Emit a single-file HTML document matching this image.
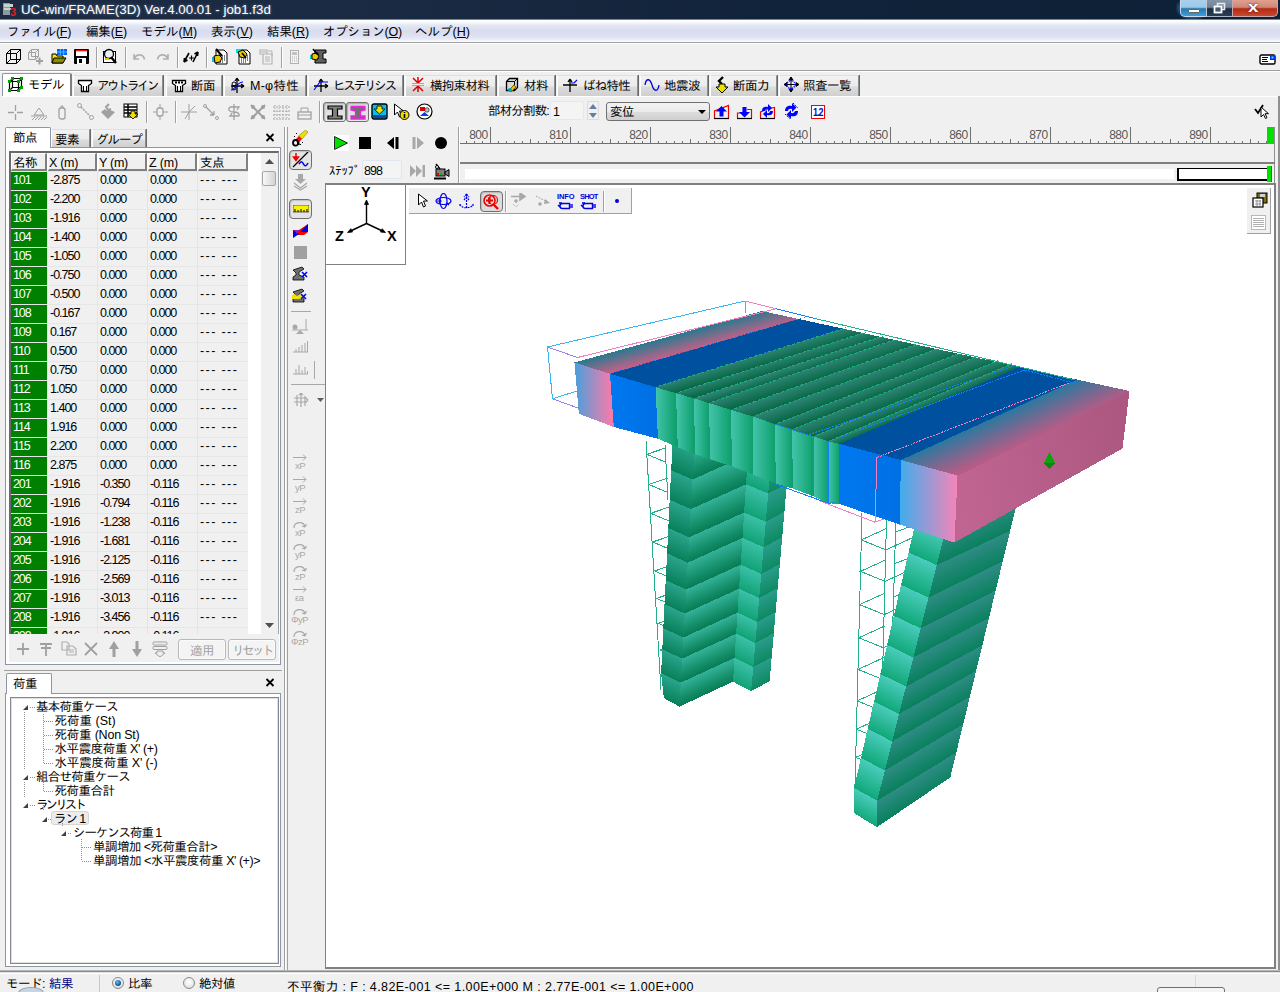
<!DOCTYPE html>
<html lang="ja"><head><meta charset="utf-8"><title>UC-win/FRAME(3D) Ver.4.00.01 - job1.f3d</title>
<style>
*{box-sizing:border-box;margin:0;padding:0}
html,body{width:1280px;height:992px;overflow:hidden;background:#f0f0f0}
body{position:relative;font-family:"Liberation Sans","IPAGothic",sans-serif;font-size:12px;color:#000;line-height:1}
.a{position:absolute}
.t{position:absolute;white-space:nowrap;line-height:1}
u{text-decoration:underline}
.tb{position:absolute;left:11px;top:153px;width:250px;height:481px;overflow:hidden}.r{position:absolute;left:0;width:237px;height:18px;font-size:12.5px;line-height:16px;white-space:nowrap}.r b{position:absolute;left:0;top:0;width:36px;height:18px;background:#008000;color:#fff;font-weight:normal;padding-left:2px;letter-spacing:-1.1px}.r i{position:absolute;top:0;width:50px;height:18px;background:#f0f0f0;font-style:normal;padding-left:2px;border-left:1px solid #e4e4e4;letter-spacing:-1px}
</style></head><body>
<div class="a" style="left:0px;top:0px;width:1280px;height:20px;background:linear-gradient(90deg,#1c2b42 0,#1a2a42 30%,#11233a 60%,#0d2036 100%)"></div>
<div class="a" style="left:0px;top:19px;width:1280px;height:1px;background:#7a8494"></div>
<svg class="a" style="left:2px;top:2px" width="18" height="16" viewBox="0 0 18 16" ><rect x="1" y="1" width="7" height="12" fill="#8a9aa0"/><rect x="2" y="2" width="9" height="3" fill="#c8d0d0"/><rect x="2" y="6" width="7" height="2" fill="#c8d0d0"/><text x="8" y="14" font-family="Liberation Sans,sans-serif" font-weight="bold" font-size="11" fill="#e02020">3</text></svg>
<span class="t" id="t0" style="left:21px;top:2.5px;font-size:13.3px;color:#fff;text-shadow:0 0 3px rgba(140,160,200,.8)">UC-win/FRAME(3D) Ver.4.00.01 - job1.f3d</span>
<div class="a" style="left:1176px;top:-4px;width:34px;height:24px;border-radius:8px;background:radial-gradient(ellipse at center,rgba(80,200,255,.9) 0,rgba(60,170,240,.5) 50%,rgba(40,120,200,0) 75%)"></div>
<div class="a" style="left:1180px;top:0px;width:27px;height:17px;border:1px solid #c8d8e8;border-top:none;border-radius:0 0 0 5px;background:linear-gradient(180deg,#a8d0ec 0,#9cc8e8 45%,#2878b0 55%,#38a0d8 100%)"></div>
<div class="a" style="left:1206px;top:0px;width:27px;height:17px;border:1px solid #a8b4c4;border-top:none;border-left:1px solid #c0c8d4;background:linear-gradient(180deg,#8494a8 0,#728298 45%,#1c2c44 55%,#2a3c56 100%)"></div>
<div class="a" style="left:1232px;top:0px;width:46px;height:17px;border:1px solid #c8a8a8;border-top:none;border-radius:0 0 5px 0;background:linear-gradient(180deg,#e0a090 0,#d08878 45%,#b42c14 55%,#c84830 100%)"></div>
<div class="a" style="left:1188px;top:9px;width:12px;height:4px;background:#fff;border:1px solid #666;border-radius:1px"></div>
<svg class="a" style="left:1213px;top:2px" width="14" height="12" viewBox="0 0 14 12" ><rect x="4.5" y="1.5" width="7" height="6" fill="none" stroke="#e8e8e8" stroke-width="1.6"/><rect x="1.5" y="4.5" width="7" height="6" fill="#4a5a70" stroke="#fff" stroke-width="1.8"/></svg>
<span class="t" id="t1" style="left:1248px;top:-1px;font-size:15px;color:#fff;font-weight:bold;text-shadow:0 0 2px #400;transform:scaleX(1.25);transform-origin:0 0">x</span>
<div class="a" style="left:0px;top:20px;width:1280px;height:22px;background:linear-gradient(180deg,#fff 0,#fafbfd 2px,#e4e8f4 5px,#d8dcee 11px,#dde1f1 16px,#eceff7 20px,#fff 22px)"></div>
<span class="t" id="t2" style="left:7px;top:25.5px;font-size:12.5px;letter-spacing:-0.28px;">ファイル(<u>F</u>)</span>
<span class="t" id="t3" style="left:86px;top:25.5px;font-size:12.5px;letter-spacing:-0.14px;">編集(<u>E</u>)</span>
<span class="t" id="t4" style="left:141px;top:25.5px;font-size:12.5px;letter-spacing:-0.04px;">モデル(<u>M</u>)</span>
<span class="t" id="t5" style="left:211px;top:25.5px;font-size:12.5px;letter-spacing:0.06px;">表示(<u>V</u>)</span>
<span class="t" id="t6" style="left:267px;top:25.5px;font-size:12.5px;letter-spacing:-0.07px;">結果(<u>R</u>)</span>
<span class="t" id="t7" style="left:323px;top:25.5px;font-size:12.5px;letter-spacing:-0.20px;">オプション(<u>O</u>)</span>
<span class="t" id="t8" style="left:415px;top:25.5px;font-size:12.5px;letter-spacing:0.02px;">ヘルプ(<u>H</u>)</span>
<div class="a" style="left:0px;top:42px;width:1280px;height:1px;background:#a0a0a0"></div>
<div class="a" style="left:0px;top:43px;width:1280px;height:1px;background:#fff"></div>
<svg class="a" style="left:5px;top:48px" width="17" height="17" viewBox="0 0 17 17" ><path d="M1.5 5.5h10v10h-10zM1.5 5.5l4-4h10v10l-4 4M11.5 5.5l4-4M5.5 1.5v10h10M5.5 11.5l-4 4" fill="none" stroke="#000" stroke-width="1"/></svg>
<svg class="a" style="left:27px;top:48px" width="17" height="17" viewBox="0 0 17 17" ><path d="M1.5 4.5h7v7h-7zM1.5 4.5l3-3h7v7l-3 3M8.5 4.5l3-3M4.5 1.5v7h7" fill="none" stroke="#a0a0a0"/><path d="M9 13h7M12.5 9.5v7" stroke="#a0a0a0" stroke-width="2"/></svg>
<svg class="a" style="left:51px;top:48px" width="17" height="17" viewBox="0 0 17 17" ><path d="M1 6h4l1 2h6v7h-11z" fill="#f0e020" stroke="#000"/><path d="M3 10h12l-3 5h-11z" fill="#8c8c00" stroke="#000"/><rect x="6" y="1" width="10" height="6" fill="#0060ff"/><path d="M6 4h10M9.3 1v6M12.6 1v6" stroke="#40c0ff"/></svg>
<svg class="a" style="left:73px;top:48px" width="17" height="17" viewBox="0 0 17 17" ><rect x="1" y="1" width="15" height="15" rx="1" fill="#000"/><rect x="3" y="2" width="11" height="6" fill="#fff"/><rect x="3" y="2" width="11" height="1.300" fill="#f01010"/><rect x="4" y="10" width="9" height="6" fill="#fff"/><rect x="6" y="11" width="3" height="4" fill="#000"/></svg>
<div class="a" style="left:96px;top:47px;width:1px;height:21px;background:#a0a0a0"></div>
<div class="a" style="left:97px;top:47px;width:1px;height:21px;background:#fff"></div>
<svg class="a" style="left:102px;top:48px" width="17" height="17" viewBox="0 0 17 17" ><rect x="1.5" y="3.5" width="12" height="11" fill="#fff" stroke="#000"/><circle cx="7" cy="6" r="4.5" fill="#e8f0f8" stroke="#000" stroke-width="1.3"/><path d="M9 9l5 6" stroke="#000" stroke-width="2.4"/><path d="M3 11h4" stroke="#e0c000" stroke-width="2"/></svg>
<div class="a" style="left:125px;top:47px;width:1px;height:21px;background:#a0a0a0"></div>
<div class="a" style="left:126px;top:47px;width:1px;height:21px;background:#fff"></div>
<svg class="a" style="left:132px;top:50px" width="16" height="12" viewBox="0 0 16 12" ><path d="M2 4v5h5M2.5 8.5c2-5 9-5 10 1" fill="none" stroke="#b0b0b0" stroke-width="1.6"/></svg>
<svg class="a" style="left:155px;top:50px" width="16" height="12" viewBox="0 0 16 12" ><path d="M13 4v5h-5M12.500 8.500c-2-5-9-5-10 1" fill="none" stroke="#b0b0b0" stroke-width="1.6"/></svg>
<div class="a" style="left:177px;top:47px;width:1px;height:21px;background:#a0a0a0"></div>
<div class="a" style="left:178px;top:47px;width:1px;height:21px;background:#fff"></div>
<svg class="a" style="left:183px;top:49px" width="17" height="15" viewBox="0 0 17 15" ><path d="M1 13l5-9M1 13l.5-4M1 13l3.500-2M10 13l5-10M15 3l-.5 4M15 3l-3.500 2" stroke="#000" stroke-width="1.6" fill="none"/><path d="M6 9h5M8.500 6.500v5" stroke="#000" stroke-width="1.2"/></svg>
<div class="a" style="left:206px;top:47px;width:1px;height:21px;background:#a0a0a0"></div>
<div class="a" style="left:207px;top:47px;width:1px;height:21px;background:#fff"></div>
<svg class="a" style="left:212px;top:48px" width="17" height="17" viewBox="0 0 17 17" ><path d="M4 2h8l3 3v11h-11z" fill="#fff" stroke="#000"/><path d="M6 8h7M6 10h7M6 12h7M6 14h5" stroke="#000" stroke-dasharray="1 1"/><rect x="0" y="9" width="4" height="5" fill="#00c0e0"/><path d="M2 8l5-1 3 3-2 4-5 1z" fill="#e8c800" stroke="#000"/><path d="M4 1l6 7" stroke="#000" stroke-width="2"/></svg>
<svg class="a" style="left:235px;top:48px" width="17" height="17" viewBox="0 0 17 17" ><path d="M4 2h8l3 3v11h-11z" fill="#fff" stroke="#000"/><path d="M6 8h7M6 10h7M6 12h7M6 14h5" stroke="#000" stroke-dasharray="1 1"/><rect x="1" y="1" width="5" height="4" fill="#00e0f0"/><path d="M3 4l5-2 4 4-2 4-5-1z" fill="#e8c800" stroke="#000"/><path d="M7 5l4 5" stroke="#000" stroke-width="1.5"/></svg>
<svg class="a" style="left:258px;top:48px" width="17" height="17" viewBox="0 0 17 17" ><path d="M2 2h7v4h-7zM5 6h9v10h-9zM7 9h5M7 11h5M7 13h5M3 4h5" fill="none" stroke="#b4b4b4" stroke-width="1.2"/><path d="M10 3h4v5" fill="none" stroke="#b4b4b4"/></svg>
<div class="a" style="left:281px;top:47px;width:1px;height:21px;background:#a0a0a0"></div>
<div class="a" style="left:282px;top:47px;width:1px;height:21px;background:#fff"></div>
<svg class="a" style="left:289px;top:49px" width="11" height="16" viewBox="0 0 11 16" ><rect x="1.5" y="1.5" width="8" height="13" fill="#f4f4f4" stroke="#b0b0b0"/><rect x="3" y="3" width="5" height="3" fill="#c0c0c0"/><path d="M3 8h5M3 10h5M3 12h5" stroke="#b0b0b0" stroke-dasharray="1 1"/></svg>
<svg class="a" style="left:310px;top:48px" width="17" height="17" viewBox="0 0 17 17" ><path d="M5 2h11v3h-3v6h3v4h-11v-4h3v-6h-3z" fill="#606060" stroke="#000"/><rect x="0" y="7" width="4" height="4" fill="#00d0e0"/><path d="M2 6l5-1 2 3-2 4-5-1z" fill="#e8c800" stroke="#000"/><path d="M3 1l5 6" stroke="#000" stroke-width="1.6"/></svg>
<svg class="a" style="left:1259px;top:54px" width="17" height="11" viewBox="0 0 17 11" ><rect x="1" y="1" width="15" height="9" rx="1.500" fill="#fff" stroke="#000" stroke-width="1.4"/><path d="M3 3.500h6M3 5.500h5M3 7.500h6" stroke="#000"/><rect x="11" y="1" width="5" height="5" fill="#0030e0"/><rect x="12.500" y="2.500" width="2" height="2" fill="#40e0ff"/></svg>
<div class="a" style="left:0px;top:70px;width:1280px;height:1px;background:#a0a0a0"></div>
<div class="a" style="left:0px;top:71px;width:1280px;height:1px;background:#fff"></div>
<div class="a" style="left:73px;top:75px;width:90px;height:21px;background:linear-gradient(180deg,#f2f2f2 0,#ebebeb 50%,#dcdcdc 55%,#cfcfcf 100%);border:1px solid #8c8e94;border-bottom:none;border-left-color:#fff;border-top-color:#e0e0e0;box-shadow:1px 0 0 #696969"></div>
<span class="t" id="t9" style="left:97px;top:79.5px;font-size:12.5px;letter-spacing:-2.50px;">アウトライン</span>
<div class="a" style="left:166px;top:75px;width:56px;height:21px;background:linear-gradient(180deg,#f2f2f2 0,#ebebeb 50%,#dcdcdc 55%,#cfcfcf 100%);border:1px solid #8c8e94;border-bottom:none;border-left-color:#fff;border-top-color:#e0e0e0;box-shadow:1px 0 0 #696969"></div>
<span class="t" id="t10" style="left:191px;top:79.5px;font-size:12.5px;letter-spacing:-0.50px;">断面</span>
<div class="a" style="left:224px;top:75px;width:82px;height:21px;background:linear-gradient(180deg,#f2f2f2 0,#ebebeb 50%,#dcdcdc 55%,#cfcfcf 100%);border:1px solid #8c8e94;border-bottom:none;border-left-color:#fff;border-top-color:#e0e0e0;box-shadow:1px 0 0 #696969"></div>
<span class="t" id="t11" style="left:250px;top:79.5px;font-size:12.5px;letter-spacing:0.26px;">M-φ特性</span>
<div class="a" style="left:308px;top:75px;width:95px;height:21px;background:linear-gradient(180deg,#f2f2f2 0,#ebebeb 50%,#dcdcdc 55%,#cfcfcf 100%);border:1px solid #8c8e94;border-bottom:none;border-left-color:#fff;border-top-color:#e0e0e0;box-shadow:1px 0 0 #696969"></div>
<span class="t" id="t12" style="left:333px;top:79.5px;font-size:12.5px;letter-spacing:-2.17px;">ヒステリシス</span>
<div class="a" style="left:405px;top:75px;width:91px;height:21px;background:linear-gradient(180deg,#f2f2f2 0,#ebebeb 50%,#dcdcdc 55%,#cfcfcf 100%);border:1px solid #8c8e94;border-bottom:none;border-left-color:#fff;border-top-color:#e0e0e0;box-shadow:1px 0 0 #696969"></div>
<span class="t" id="t13" style="left:430px;top:79.5px;font-size:12.5px;letter-spacing:-0.70px;">横拘束材料</span>
<div class="a" style="left:498px;top:75px;width:57px;height:21px;background:linear-gradient(180deg,#f2f2f2 0,#ebebeb 50%,#dcdcdc 55%,#cfcfcf 100%);border:1px solid #8c8e94;border-bottom:none;border-left-color:#fff;border-top-color:#e0e0e0;box-shadow:1px 0 0 #696969"></div>
<span class="t" id="t14" style="left:524px;top:79.5px;font-size:12.5px;letter-spacing:-0.50px;">材料</span>
<div class="a" style="left:557px;top:75px;width:81px;height:21px;background:linear-gradient(180deg,#f2f2f2 0,#ebebeb 50%,#dcdcdc 55%,#cfcfcf 100%);border:1px solid #8c8e94;border-bottom:none;border-left-color:#fff;border-top-color:#e0e0e0;box-shadow:1px 0 0 #696969"></div>
<span class="t" id="t15" style="left:583px;top:79.5px;font-size:12.5px;letter-spacing:-0.75px;">ばね特性</span>
<div class="a" style="left:640px;top:75px;width:68px;height:21px;background:linear-gradient(180deg,#f2f2f2 0,#ebebeb 50%,#dcdcdc 55%,#cfcfcf 100%);border:1px solid #8c8e94;border-bottom:none;border-left-color:#fff;border-top-color:#e0e0e0;box-shadow:1px 0 0 #696969"></div>
<span class="t" id="t16" style="left:664px;top:79.5px;font-size:12.5px;letter-spacing:-0.50px;">地震波</span>
<div class="a" style="left:710px;top:75px;width:67px;height:21px;background:linear-gradient(180deg,#f2f2f2 0,#ebebeb 50%,#dcdcdc 55%,#cfcfcf 100%);border:1px solid #8c8e94;border-bottom:none;border-left-color:#fff;border-top-color:#e0e0e0;box-shadow:1px 0 0 #696969"></div>
<span class="t" id="t17" style="left:733px;top:79.5px;font-size:12.5px;letter-spacing:-0.50px;">断面力</span>
<div class="a" style="left:779px;top:75px;width:80px;height:21px;background:linear-gradient(180deg,#f2f2f2 0,#ebebeb 50%,#dcdcdc 55%,#cfcfcf 100%);border:1px solid #8c8e94;border-bottom:none;border-left-color:#fff;border-top-color:#e0e0e0;box-shadow:1px 0 0 #696969"></div>
<span class="t" id="t18" style="left:803px;top:79.5px;font-size:12.5px;letter-spacing:-0.50px;">照査一覧</span>
<div class="a" style="left:2px;top:73px;width:70px;height:23px;background:#fff;border:1px solid #8e96a4;border-bottom:none;border-right:2px solid #808080;border-radius:2px 2px 0 0"></div>
<span class="t" id="t19" style="left:28px;top:79px;font-size:12.5px;letter-spacing:-0.50px;">モデル</span>
<div class="a" style="left:2px;top:96px;width:1276px;height:1px;background:#fff"></div>
<svg class="a" style="left:7px;top:76px" width="17" height="17" viewBox="0 0 17 17" ><path d="M2.500 5.500h9v9h-9zM2.500 5.500l3-3h9v9l-3 3M11.500 5.500l3-3M5.500 2.500v9h9M5.500 11.500l-3 3" fill="none" stroke="#000" stroke-width="1.2"/><g fill="#00a000"><rect x="1" y="4" width="3" height="3"/><rect x="10" y="4" width="3" height="3"/><rect x="1" y="13" width="3" height="3"/><rect x="10" y="13" width="3" height="3"/><rect x="13" y="1" width="3" height="3"/><rect x="4" y="1" width="3" height="3"/><rect x="13" y="10" width="3" height="3"/></g></svg>
<svg class="a" style="left:77px;top:78px" width="16" height="15" viewBox="0 0 16 15" ><path d="M1.500 2.500h13v3l-3 2v6h-7v-6l-3-2z" fill="#fff" stroke="#000" stroke-width="1.3"/><path d="M6.500 8v5M9.500 8v5" stroke="#000"/></svg>
<svg class="a" style="left:171px;top:78px" width="16" height="15" viewBox="0 0 16 15" ><path d="M1.500 2.500h13v3l-3 2v6h-7v-6l-3-2z" fill="#fff" stroke="#000" stroke-width="1.3"/><path d="M4 4.500h8" stroke="#000" stroke-dasharray="2 1" stroke-width="2"/><path d="M6.500 8v5M9.500 8v5" stroke="#000"/></svg>
<svg class="a" style="left:229px;top:77px" width="17" height="17" viewBox="0 0 17 17" ><path d="M8 1v15M2 9h13M8 1l-2 3M8 1l2 3M15 9l-3-2M15 9l-3 2" stroke="#000" stroke-width="1.3" fill="none"/><circle cx="5" cy="7" r="2" fill="none" stroke="#000"/><circle cx="5" cy="11" r="2" fill="none" stroke="#000"/><path d="M2 13c4 0 6-8 12-8" stroke="#0000ff" fill="none" stroke-width="1.2"/></svg>
<svg class="a" style="left:313px;top:77px" width="17" height="17" viewBox="0 0 17 17" ><path d="M8 2v13M1 9h14M8 2l-2 3M8 2l2 3M15 9l-3-2M15 9l-3 2" stroke="#000" stroke-width="1.3" fill="none"/><path d="M1 13l6-8h8" stroke="#0000ff" fill="none" stroke-width="1.2"/></svg>
<svg class="a" style="left:411px;top:76px" width="14" height="17" viewBox="0 0 14 17" ><path d="M7 1v6M2 2l5 5M12 2l-5 5M7 16v-6M2 15l5-5M12 15l-5-5" stroke="#e00000" stroke-width="1.500"/><path d="M1 7.500h12M1 9.500h12" stroke="#f0a000" stroke-width="1.2"/></svg>
<svg class="a" style="left:504px;top:76px" width="16" height="18" viewBox="0 0 16 18" ><path d="M2.500 5.500l3-3h8v9l-3 3h-8z" fill="#d8d8d8" stroke="#000" stroke-width="1.300"/><path d="M2.500 5.500h8v9M10.500 5.500l3-3" fill="none" stroke="#000"/><path d="M5 14l5-5 2 2-5 5z" fill="#e8c000" stroke="#806000"/><circle cx="6" cy="14" r="2" fill="#00a0c0"/></svg>
<svg class="a" style="left:562px;top:77px" width="17" height="17" viewBox="0 0 17 17" ><path d="M8 2v13M1 8h14M8 2l-2 3M8 2l2 3" stroke="#000" stroke-width="1.300" fill="none"/><path d="M9 6h3l3-3" stroke="#0000ff" fill="none" stroke-width="1.200"/></svg>
<svg class="a" style="left:644px;top:78px" width="16" height="14" viewBox="0 0 16 14" ><path d="M1 7c1-7 5-7 7 0s6 7 7 0" fill="none" stroke="#0000e0" stroke-width="1.300"/></svg>
<svg class="a" style="left:714px;top:76px" width="16" height="18" viewBox="0 0 16 18" ><path d="M9 1l-4 4 3 3" fill="none" stroke="#000" stroke-width="2.400"/><path d="M5 8h6v3h3l-6 6-6-6h3z" fill="#f0e000" stroke="#000"/></svg>
<svg class="a" style="left:783px;top:76px" width="17" height="17" viewBox="0 0 17 17" ><path d="M8 1v15M1 8.500h15M8 1l-2 3h4zM8 16l-2-3h4zM1 8.500l3-2v4zM16 8.500l-3-2v4z" stroke="#000" fill="#000"/><circle cx="8" cy="8.500" r="4" fill="none" stroke="#0000ff" stroke-dasharray="1 1" stroke-width="1.500"/></svg>
<svg class="a" style="left:8px;top:105px" width="15" height="15" viewBox="0 0 15 15" ><path d="M7.500 0v6M7.500 9v6M0 7.500h6M9 7.500h6" stroke="#a0a0a0" fill="none" stroke-width="1.300"/></svg>
<svg class="a" style="left:31px;top:107px" width="16" height="14" viewBox="0 0 16 14" ><path d="M8 1l-5 7h10zM0 9h16" stroke="#a0a0a0" fill="none"/><path d="M1 13l3-3M4 13l3-3M7 13l3-3M10 13l3-3M13 13l3-3" stroke="#a0a0a0" fill="none"/></svg>
<svg class="a" style="left:57px;top:105px" width="10" height="15" viewBox="0 0 10 15" ><rect x="2" y="3" width="6" height="11" rx="2" stroke="#a0a0a0" fill="none" stroke-width="1.300"/><path d="M4 3v-2h2v2" stroke="#a0a0a0" fill="none"/></svg>
<svg class="a" style="left:77px;top:103px" width="17" height="17" viewBox="0 0 17 17" ><circle cx="2.500" cy="2.500" r="2" stroke="#a0a0a0" fill="none"/><circle cx="14.500" cy="14.500" r="2" stroke="#a0a0a0" fill="none"/><path d="M4 4l9 9" stroke="#a0a0a0" fill="none" stroke-dasharray="2 1" stroke-width="1.500"/></svg>
<svg class="a" style="left:100px;top:103px" width="16" height="17" viewBox="0 0 16 17" ><path d="M9 1l-3 3 2 3 3-1" stroke="#a0a0a0" fill="none" stroke-width="2"/><path d="M1 9l4-3 2 2 3-1 5 2-7 7z" fill="#a0a0a0"/></svg>
<svg class="a" style="left:123px;top:103px" width="16" height="17" viewBox="0 0 16 17" ><rect x="1" y="1" width="13" height="13" fill="#fff" stroke="#000"/><path d="M1 4h13M1 7h13M1 10h13M5 1v13" stroke="#000" stroke-width="1.500"/><path d="M8 8h4v3h3l-5 5-5-5h3z" fill="#f0e000" stroke="#000" stroke-width=".8"/></svg>
<div class="a" style="left:146px;top:101px;width:1px;height:22px;background:#a0a0a0"></div>
<div class="a" style="left:147px;top:101px;width:1px;height:22px;background:#fff"></div>
<svg class="a" style="left:153px;top:104px" width="15" height="16" viewBox="0 0 15 16" ><path d="M7 0v4M7 12v4M0 8h4M10 8h5" stroke="#a0a0a0" fill="none"/><rect x="4" y="4" width="6" height="8" rx="2" stroke="#a0a0a0" fill="none" stroke-width="1.300"/></svg>
<div class="a" style="left:175px;top:101px;width:1px;height:22px;background:#a0a0a0"></div>
<div class="a" style="left:176px;top:101px;width:1px;height:22px;background:#fff"></div>
<svg class="a" style="left:181px;top:104px" width="16" height="16" viewBox="0 0 16 16" ><path d="M8 0v16M0 8h16M8 8l6-6M8 8l-4 7" stroke="#a0a0a0" fill="none"/></svg>
<svg class="a" style="left:203px;top:104px" width="16" height="16" viewBox="0 0 16 16" ><circle cx="2" cy="2" r="1.500" stroke="#a0a0a0" fill="none"/><circle cx="14" cy="14" r="1.500" stroke="#a0a0a0" fill="none"/><path d="M3 3l8 8M11 11v-4M11 11h-4" stroke="#a0a0a0" fill="none" stroke-width="1.300"/></svg>
<svg class="a" style="left:227px;top:104px" width="15" height="16" viewBox="0 0 15 16" ><path d="M3 3h9l-2 3M12 12h-9l2-3M3 3c-3 3 0 5 4 5s6 2 5 4M7 0v16" stroke="#a0a0a0" fill="none" stroke-width="1.300"/></svg>
<svg class="a" style="left:250px;top:104px" width="16" height="16" viewBox="0 0 16 16" ><path d="M1 1l14 14M15 1l-14 14" stroke="#a0a0a0" fill="none" stroke-width="2"/><circle cx="3" cy="3" r="2" fill="#a0a0a0"/><circle cx="13" cy="3" r="2" fill="#a0a0a0"/><circle cx="3" cy="13" r="2" fill="#a0a0a0"/><circle cx="13" cy="13" r="2" fill="#a0a0a0"/></svg>
<svg class="a" style="left:273px;top:105px" width="18" height="15" viewBox="0 0 18 15" ><path d="M0 2h18M0 6h18M0 10h18M0 14h18" stroke="#a0a0a0" fill="none" stroke-dasharray="2 1"/><path d="M2 0v15M6 0v15M10 0v15M14 0v15" stroke="#a0a0a0" fill="none" stroke-dasharray="1 2"/></svg>
<svg class="a" style="left:297px;top:105px" width="15" height="15" viewBox="0 0 15 15" ><rect x="1" y="7" width="13" height="7" stroke="#a0a0a0" fill="none" stroke-width="1.300"/><path d="M4 7v-4h7v4M1 10h13" stroke="#a0a0a0" fill="none"/></svg>
<div class="a" style="left:319px;top:101px;width:1px;height:22px;background:#a0a0a0"></div>
<div class="a" style="left:320px;top:101px;width:1px;height:22px;background:#fff"></div>
<div class="a" style="left:323px;top:102px;width:23px;height:20px;border:1px solid #707070;border-radius:3px;background:linear-gradient(180deg,#d8d8d8,#e8e8e8);box-shadow:inset 1px 1px 1px #b0b0b0"></div>
<div class="a" style="left:346px;top:102px;width:23px;height:20px;border:1px solid #707070;border-radius:3px;background:linear-gradient(180deg,#d8d8d8,#e8e8e8);box-shadow:inset 1px 1px 1px #b0b0b0"></div>
<svg class="a" style="left:327px;top:105px" width="16" height="15" viewBox="0 0 16 15" ><path d="M1 1h14v3h-4.500v7h4.500v3h-14v-3h4.500v-7h-4.500z" fill="#808080" stroke="#000" stroke-width="1.200"/></svg>
<svg class="a" style="left:350px;top:105px" width="16" height="15" viewBox="0 0 16 15" ><path d="M1 2h14v3l-4.500 1v5h4.500v3h-14v-3h4.500v-5l-4.500-1z" fill="#707070" stroke="#f020e0" stroke-width="1.300"/><path d="M1 1.500h14" stroke="#f020e0" stroke-width="1.500"/></svg>
<svg class="a" style="left:371px;top:103px" width="17" height="17" viewBox="0 0 17 17" ><rect x="1" y="1" width="15" height="15" rx="2" fill="#00c0f0" stroke="#000" stroke-width="1.400"/><path d="M6 3h5v3h3l-5.500 5-5.500-5h3z" fill="#f0e000" stroke="#000" stroke-width=".8"/><rect x="2" y="12" width="13" height="3" fill="#2040a0"/></svg>
<svg class="a" style="left:393px;top:103px" width="17" height="17" viewBox="0 0 17 17" ><path d="M1.500 1v11l3-3 2 5 2-1-2-5h4z" fill="#fff" stroke="#000"/><circle cx="11.500" cy="12" r="4.500" fill="#f0e000" stroke="#000"/><path d="M11.500 9v1M11.500 11v4" stroke="#000" stroke-width="1.600"/></svg>
<svg class="a" style="left:416px;top:103px" width="17" height="17" viewBox="0 0 17 17" ><circle cx="8.500" cy="8.500" r="7.500" fill="#fff" stroke="#000" stroke-width="1.200"/><rect x="4" y="4" width="5" height="4" fill="#e00000"/><circle cx="11" cy="7" r="2.200" fill="#c0c0c0" stroke="#000" stroke-width=".6"/><path d="M4 13l4.500-4 4.500 4z" fill="#0040e0"/></svg>
<span class="t" id="t20" style="left:488px;top:104.5px;font-size:12.5px;letter-spacing:-0.83px;">部材分割数:</span>
<div class="a" style="left:550px;top:101px;width:34px;height:19px;border:1px solid #e4e8ee;border-radius:2px;background:#f4f4f4"></div>
<span class="t" id="t21" style="left:553px;top:105.5px;font-size:12.5px;">1</span>
<div class="a" style="left:587px;top:101px;width:12px;height:19px;background:#f0f0f0;border:1px solid #dcdcdc"></div>
<svg class="a" style="left:589px;top:104px" width="8" height="14" viewBox="0 0 8 14" ><path d="M4 0l4 5h-8z" fill="#6080a8"/><path d="M4 14l4-5h-8z" fill="#6080a8"/></svg>
<div class="a" style="left:606px;top:102px;width:104px;height:19px;border:1px solid #707070;border-radius:3px;background:linear-gradient(180deg,#f2f2f2 0,#ebebeb 50%,#dddddd 52%,#cfcfcf 100%)"></div>
<span class="t" id="t22" style="left:610px;top:105.5px;font-size:12.5px;letter-spacing:-0.50px;">変位</span>
<svg class="a" style="left:698px;top:110px" width="8" height="4" viewBox="0 0 8 4" ><path d="M0 0h8l-4 4z" fill="#000"/></svg>
<svg class="a" style="left:713px;top:104px" width="17" height="16" viewBox="0 0 17 16" ><path d="M1.500 14v-7l14-5.500v12.500" fill="none" stroke="#f00000" stroke-width="1.200"/><path d="M1 14.500h15" stroke="#000" stroke-width="1.200"/><path d="M8.500 2l5.500 5.500h-3.500v5h-4v-5h-3.500z" fill="#0000ff"/></svg>
<svg class="a" style="left:736px;top:104px" width="17" height="16" viewBox="0 0 17 16" ><path d="M1.500 14v-5h4M11 5.500h4.500v8.500M6 9l4-3.500" fill="none" stroke="#f00000" stroke-width="1.200"/><path d="M1 14.500h15" stroke="#000" stroke-width="1.200"/><path d="M8.500 13.500l5.500-5.500h-3.500v-5h-4v5h-3.500z" fill="#0000ff"/></svg>
<svg class="a" style="left:759px;top:102px" width="17" height="18" viewBox="0 0 17 18" ><path d="M1.500 16v-6l7-3 7-1.500v10.500" fill="none" stroke="#f00000" stroke-width="1.200"/><path d="M1 16.500h15" stroke="#000" stroke-width="1.200"/><path d="M3 9c0-4 3-5 6-4v-3l4 4-4 4v-3c-2-.5-3 .5-3 2zM14 9c0 4-3 5-6 4v3l-4-4 4-4v3c2 .5 3-.5 3-2z" fill="#0000ff"/></svg>
<svg class="a" style="left:783px;top:102px" width="17" height="18" viewBox="0 0 17 18" ><path d="M2 9c0-5 4-6 7-5v-3l4.500 4.500-4.500 4.500v-3c-2-.5-4 .5-4 2zM15 9c0 5-4 6-7 5v3l-4.500-4.500 4.500-4.500v3c2 .5 4-.5 4-2z" fill="#0000ff"/><path d="M10 1l5 5M2 12l5 5" stroke="#0000ff" stroke-dasharray="1.500 1" fill="none"/></svg>
<div class="a" style="left:811px;top:105px;width:14px;height:14px;border:1px solid #f00000;background:#fff"></div>
<span class="t" id="t23" style="left:813px;top:106.5px;font-size:9px;color:#0000e0;letter-spacing:-1.01px;font-weight:bold;transform:scaleY(1.3);transform-origin:0 0">1.2</span>
<svg class="a" style="left:1254px;top:103px" width="15" height="16" viewBox="0 0 15 16" ><path d="M1 6l3 4 5-8" fill="none" stroke="#000" stroke-width="1.800"/><path d="M7 4v10l2.500-2.500 2 4 1.500-.8-2-4h3.500z" fill="#fff" stroke="#000"/></svg>
<div class="a" style="left:5px;top:147px;width:276px;height:518px;background:#fff;border:1px solid #8e96a4"></div>
<div class="a" style="left:51px;top:129px;width:39px;height:19px;background:linear-gradient(180deg,#f2f2f2 0,#ebebeb 50%,#dcdcdc 55%,#cfcfcf 100%);border:1px solid #8c8e94;border-bottom:none;border-left-color:#fff;border-top-color:#e0e0e0;box-shadow:1px 0 0 #696969"></div>
<span class="t" id="t24" style="left:55px;top:133.5px;font-size:12.5px;letter-spacing:-0.50px;">要素</span>
<div class="a" style="left:92px;top:129px;width:54px;height:19px;background:linear-gradient(180deg,#f2f2f2 0,#ebebeb 50%,#dcdcdc 55%,#cfcfcf 100%);border:1px solid #8c8e94;border-bottom:none;border-left-color:#fff;border-top-color:#e0e0e0;box-shadow:1px 0 0 #696969"></div>
<span class="t" id="t25" style="left:96px;top:133.5px;font-size:12.5px;letter-spacing:-1.00px;">グループ</span>
<div class="a" style="left:51px;top:147px;width:230px;height:1px;background:#8e96a4"></div>
<div class="a" style="left:5px;top:127px;width:46px;height:21px;background:#fff;border:1px solid #8e96a4;border-bottom:none;border-radius:2px 2px 0 0"></div>
<span class="t" id="t26" style="left:13px;top:131.5px;font-size:12.5px;letter-spacing:-0.50px;">節点</span>
<svg class="a" style="left:265px;top:133px" width="10" height="9" viewBox="0 0 10 9" ><path d="M1.500 1l7 7M8.500 1l-7 7" stroke="#000" stroke-width="1.800"/></svg>
<div class="a" style="left:9px;top:151px;width:270px;height:484px;background:#f0f0f0;border:2px solid #696969;border-right:1px solid #a0a0a0;border-bottom:none"></div>
<div class="a" style="left:11px;top:153px;width:267px;height:481px;background:#fff"></div>
<div class="a" style="left:11px;top:153px;width:36px;height:18px;background:#f0f0f0;border-top:1px solid #fff;border-left:1px solid #fff;border-right:2px solid #808080;border-bottom:2px solid #808080"></div>
<span class="t" id="t27" style="left:13px;top:156.5px;font-size:12.5px;letter-spacing:-0.50px;">名称</span>
<div class="a" style="left:47.5px;top:153px;width:49.5px;height:18px;background:#f0f0f0;border-top:1px solid #fff;border-left:1px solid #fff;border-right:2px solid #808080;border-bottom:2px solid #808080"></div>
<span class="t" id="t28" style="left:49px;top:156.5px;font-size:12.5px;letter-spacing:-0.31px;">X (m)</span>
<div class="a" style="left:97.5px;top:153px;width:49.5px;height:18px;background:#f0f0f0;border-top:1px solid #fff;border-left:1px solid #fff;border-right:2px solid #808080;border-bottom:2px solid #808080"></div>
<span class="t" id="t29" style="left:99px;top:156.5px;font-size:12.5px;letter-spacing:-0.27px;">Y (m)</span>
<div class="a" style="left:147.5px;top:153px;width:49.5px;height:18px;background:#f0f0f0;border-top:1px solid #fff;border-left:1px solid #fff;border-right:2px solid #808080;border-bottom:2px solid #808080"></div>
<span class="t" id="t30" style="left:149px;top:156.5px;font-size:12.5px;letter-spacing:-0.17px;">Z (m)</span>
<div class="a" style="left:197.5px;top:153px;width:50.5px;height:18px;background:#f0f0f0;border-top:1px solid #fff;border-left:1px solid #fff;border-right:2px solid #808080;border-bottom:2px solid #808080"></div>
<span class="t" id="t31" style="left:200px;top:156.5px;font-size:12.5px;letter-spacing:-0.50px;">支点</span>
<div class="tb"><div class="a" style="left:0;top:18px;width:237px;height:463px;background:#e6e6e6"></div><div class="r" style="top:19px"><b>101</b><i style="left:36px">-2.875</i><i style="left:86px">0.000</i><i style="left:136px">0.000</i><i style="left:186px;width:51px;letter-spacing:1.4px">--- ---</i></div><div class="r" style="top:38px"><b>102</b><i style="left:36px">-2.200</i><i style="left:86px">0.000</i><i style="left:136px">0.000</i><i style="left:186px;width:51px;letter-spacing:1.4px">--- ---</i></div><div class="r" style="top:57px"><b>103</b><i style="left:36px">-1.916</i><i style="left:86px">0.000</i><i style="left:136px">0.000</i><i style="left:186px;width:51px;letter-spacing:1.4px">--- ---</i></div><div class="r" style="top:76px"><b>104</b><i style="left:36px">-1.400</i><i style="left:86px">0.000</i><i style="left:136px">0.000</i><i style="left:186px;width:51px;letter-spacing:1.4px">--- ---</i></div><div class="r" style="top:95px"><b>105</b><i style="left:36px">-1.050</i><i style="left:86px">0.000</i><i style="left:136px">0.000</i><i style="left:186px;width:51px;letter-spacing:1.4px">--- ---</i></div><div class="r" style="top:114px"><b>106</b><i style="left:36px">-0.750</i><i style="left:86px">0.000</i><i style="left:136px">0.000</i><i style="left:186px;width:51px;letter-spacing:1.4px">--- ---</i></div><div class="r" style="top:133px"><b>107</b><i style="left:36px">-0.500</i><i style="left:86px">0.000</i><i style="left:136px">0.000</i><i style="left:186px;width:51px;letter-spacing:1.4px">--- ---</i></div><div class="r" style="top:152px"><b>108</b><i style="left:36px">-0.167</i><i style="left:86px">0.000</i><i style="left:136px">0.000</i><i style="left:186px;width:51px;letter-spacing:1.4px">--- ---</i></div><div class="r" style="top:171px"><b>109</b><i style="left:36px">0.167</i><i style="left:86px">0.000</i><i style="left:136px">0.000</i><i style="left:186px;width:51px;letter-spacing:1.4px">--- ---</i></div><div class="r" style="top:190px"><b>110</b><i style="left:36px">0.500</i><i style="left:86px">0.000</i><i style="left:136px">0.000</i><i style="left:186px;width:51px;letter-spacing:1.4px">--- ---</i></div><div class="r" style="top:209px"><b>111</b><i style="left:36px">0.750</i><i style="left:86px">0.000</i><i style="left:136px">0.000</i><i style="left:186px;width:51px;letter-spacing:1.4px">--- ---</i></div><div class="r" style="top:228px"><b>112</b><i style="left:36px">1.050</i><i style="left:86px">0.000</i><i style="left:136px">0.000</i><i style="left:186px;width:51px;letter-spacing:1.4px">--- ---</i></div><div class="r" style="top:247px"><b>113</b><i style="left:36px">1.400</i><i style="left:86px">0.000</i><i style="left:136px">0.000</i><i style="left:186px;width:51px;letter-spacing:1.4px">--- ---</i></div><div class="r" style="top:266px"><b>114</b><i style="left:36px">1.916</i><i style="left:86px">0.000</i><i style="left:136px">0.000</i><i style="left:186px;width:51px;letter-spacing:1.4px">--- ---</i></div><div class="r" style="top:285px"><b>115</b><i style="left:36px">2.200</i><i style="left:86px">0.000</i><i style="left:136px">0.000</i><i style="left:186px;width:51px;letter-spacing:1.4px">--- ---</i></div><div class="r" style="top:304px"><b>116</b><i style="left:36px">2.875</i><i style="left:86px">0.000</i><i style="left:136px">0.000</i><i style="left:186px;width:51px;letter-spacing:1.4px">--- ---</i></div><div class="r" style="top:323px"><b>201</b><i style="left:36px">-1.916</i><i style="left:86px">-0.350</i><i style="left:136px">-0.116</i><i style="left:186px;width:51px;letter-spacing:1.4px">--- ---</i></div><div class="r" style="top:342px"><b>202</b><i style="left:36px">-1.916</i><i style="left:86px">-0.794</i><i style="left:136px">-0.116</i><i style="left:186px;width:51px;letter-spacing:1.4px">--- ---</i></div><div class="r" style="top:361px"><b>203</b><i style="left:36px">-1.916</i><i style="left:86px">-1.238</i><i style="left:136px">-0.116</i><i style="left:186px;width:51px;letter-spacing:1.4px">--- ---</i></div><div class="r" style="top:380px"><b>204</b><i style="left:36px">-1.916</i><i style="left:86px">-1.681</i><i style="left:136px">-0.116</i><i style="left:186px;width:51px;letter-spacing:1.4px">--- ---</i></div><div class="r" style="top:399px"><b>205</b><i style="left:36px">-1.916</i><i style="left:86px">-2.125</i><i style="left:136px">-0.116</i><i style="left:186px;width:51px;letter-spacing:1.4px">--- ---</i></div><div class="r" style="top:418px"><b>206</b><i style="left:36px">-1.916</i><i style="left:86px">-2.569</i><i style="left:136px">-0.116</i><i style="left:186px;width:51px;letter-spacing:1.4px">--- ---</i></div><div class="r" style="top:437px"><b>207</b><i style="left:36px">-1.916</i><i style="left:86px">-3.013</i><i style="left:136px">-0.116</i><i style="left:186px;width:51px;letter-spacing:1.4px">--- ---</i></div><div class="r" style="top:456px"><b>208</b><i style="left:36px">-1.916</i><i style="left:86px">-3.456</i><i style="left:136px">-0.116</i><i style="left:186px;width:51px;letter-spacing:1.4px">--- ---</i></div><div class="r" style="top:475px"><b>209</b><i style="left:36px">-1.916</i><i style="left:86px">-3.900</i><i style="left:136px">-0.116</i><i style="left:186px;width:51px;letter-spacing:1.4px">--- ---</i></div></div>
<div class="a" style="left:261px;top:153px;width:17px;height:481px;background:#f0f0f0"></div>
<svg class="a" style="left:265px;top:159px" width="9" height="5" viewBox="0 0 9 5" ><path d="M0 5l4.500-5 4.500 5z" fill="#505050"/></svg>
<svg class="a" style="left:265px;top:623px" width="9" height="5" viewBox="0 0 9 5" ><path d="M0 0l4.500 5 4.500-5z" fill="#505050"/></svg>
<div class="a" style="left:262px;top:171px;width:14px;height:15px;background:linear-gradient(90deg,#f8f8f8,#e4e4e4 55%,#d4d4d4);border:1px solid #a8a8a8;border-radius:2px"></div>
<div class="a" style="left:9px;top:634px;width:270px;height:28px;background:#f0f0f0"></div>
<svg class="a" style="left:16px;top:642px" width="14" height="14" viewBox="0 0 14 14" ><path d="M7 1v12M1 7h12" stroke="#a0a0a0" fill="none" stroke-width="1.800"/></svg>
<svg class="a" style="left:39px;top:642px" width="14" height="14" viewBox="0 0 14 14" ><path d="M1 2h12M2 6h10M7 2v12" stroke="#a0a0a0" fill="none" stroke-width="1.800"/></svg>
<svg class="a" style="left:61px;top:641px" width="16" height="15" viewBox="0 0 16 15" ><path d="M1 1h5l2 2v6h-7zM6 5h6l3 3v6h-9z" fill="#f0f0f0" stroke="#b0b0b0" stroke-width="1.200"/><path d="M8 9h5M8 11h5" stroke="#b0b0b0"/></svg>
<svg class="a" style="left:84px;top:642px" width="15" height="14" viewBox="0 0 15 14" ><path d="M1 1l12 12M13 1l-12 12" stroke="#a0a0a0" fill="none" stroke-width="1.800"/></svg>
<svg class="a" style="left:108px;top:641px" width="12" height="16" viewBox="0 0 12 16" ><path d="M6 0l5 8h-3.500v8h-3v-8h-3.500z" fill="#a0a0a0"/></svg>
<svg class="a" style="left:131px;top:641px" width="12" height="16" viewBox="0 0 12 16" ><path d="M6 16l5-8h-3.500v-8h-3v8h-3.500z" fill="#a0a0a0"/></svg>
<svg class="a" style="left:152px;top:641px" width="16" height="16" viewBox="0 0 16 16" ><rect x="1" y="1" width="14" height="3" rx="1" stroke="#a0a0a0" fill="none"/><rect x="1" y="5.500" width="14" height="3" rx="1" stroke="#a0a0a0" fill="none"/><path d="M5 10h6v2h2l-5 4-5-4h2z" stroke="#a0a0a0" fill="none"/></svg>
<div class="a" style="left:178px;top:639px;width:48px;height:21px;border:1px solid #b8b8b8;border-radius:3px;background:#f4f4f4;box-shadow:inset 0 0 0 1px #fbfbfb"></div>
<div class="a" style="left:228px;top:639px;width:48px;height:21px;border:1px solid #b8b8b8;border-radius:3px;background:#f4f4f4;box-shadow:inset 0 0 0 1px #fbfbfb"></div>
<span class="t" id="t32" style="left:190px;top:644.5px;font-size:12.5px;color:#a0a0a0;letter-spacing:-0.50px;">適用</span>
<span class="t" id="t33" style="left:232px;top:644.5px;font-size:12.5px;color:#a0a0a0;letter-spacing:-2.50px;">リセット</span>
<div class="a" style="left:4px;top:670px;width:278px;height:1px;background:#a0a0a0"></div>
<div class="a" style="left:5px;top:693px;width:276px;height:274px;background:#fff;border:1px solid #8e96a4"></div>
<div class="a" style="left:6px;top:673px;width:46px;height:21px;background:#fff;border:1px solid #8e96a4;border-bottom:none;border-radius:2px 2px 0 0"></div>
<span class="t" id="t34" style="left:13px;top:677.5px;font-size:12.5px;letter-spacing:-0.50px;">荷重</span>
<svg class="a" style="left:265px;top:678px" width="10" height="9" viewBox="0 0 10 9" ><path d="M1.500 1l7 7M8.500 1l-7 7" stroke="#000" stroke-width="1.800"/></svg>
<div class="a" style="left:10px;top:697px;width:269px;height:267px;background:#fff;border:1px solid #828790;box-shadow:inset 0 0 0 1px #e0e0e0"></div>
<div class="a" style="left:51px;top:811px;width:38px;height:14px;background:#ececec;border:1px solid #d4d4d4;border-radius:3px"></div>
<span class="t" id="t35" style="left:36px;top:700.5px;font-size:12.5px;letter-spacing:-0.79px;">基本荷重ケース</span>
<svg class="a" style="left:23px;top:705px" width="5" height="5" viewBox="0 0 5 5" ><path d="M0 5h5v-5z" fill="#404040"/></svg>
<div class="a" style="left:30px;top:707px;width:5px;height:1px;background:repeating-linear-gradient(90deg,#909090 0,#909090 1px,transparent 1px,transparent 2px)"></div>
<span class="t" id="t36" style="left:54.5px;top:714.5px;font-size:12.5px;">死荷重 (St)</span>
<div class="a" style="left:44px;top:721px;width:9px;height:1px;background:repeating-linear-gradient(90deg,#909090 0,#909090 1px,transparent 1px,transparent 2px)"></div>
<span class="t" id="t37" style="left:54.5px;top:728.5px;font-size:12.5px;letter-spacing:-0.21px;">死荷重 (Non St)</span>
<div class="a" style="left:44px;top:735px;width:9px;height:1px;background:repeating-linear-gradient(90deg,#909090 0,#909090 1px,transparent 1px,transparent 2px)"></div>
<span class="t" id="t38" style="left:54.5px;top:742.5px;font-size:12.5px;letter-spacing:-0.41px;">水平震度荷重 X&#x27; (+)</span>
<div class="a" style="left:44px;top:749px;width:9px;height:1px;background:repeating-linear-gradient(90deg,#909090 0,#909090 1px,transparent 1px,transparent 2px)"></div>
<span class="t" id="t39" style="left:54.5px;top:756.5px;font-size:12.5px;letter-spacing:-0.17px;">水平震度荷重 X&#x27; (-)</span>
<div class="a" style="left:44px;top:763px;width:9px;height:1px;background:repeating-linear-gradient(90deg,#909090 0,#909090 1px,transparent 1px,transparent 2px)"></div>
<span class="t" id="t40" style="left:36px;top:770.5px;font-size:12.5px;letter-spacing:-0.75px;">組合せ荷重ケース</span>
<svg class="a" style="left:23px;top:775px" width="5" height="5" viewBox="0 0 5 5" ><path d="M0 5h5v-5z" fill="#404040"/></svg>
<div class="a" style="left:30px;top:777px;width:5px;height:1px;background:repeating-linear-gradient(90deg,#909090 0,#909090 1px,transparent 1px,transparent 2px)"></div>
<span class="t" id="t41" style="left:54.5px;top:784.5px;font-size:12.5px;letter-spacing:-0.50px;">死荷重合計</span>
<div class="a" style="left:44px;top:791px;width:9px;height:1px;background:repeating-linear-gradient(90deg,#909090 0,#909090 1px,transparent 1px,transparent 2px)"></div>
<span class="t" id="t42" style="left:36px;top:798.5px;font-size:12.5px;letter-spacing:-2.90px;">ランリスト</span>
<svg class="a" style="left:23px;top:803px" width="5" height="5" viewBox="0 0 5 5" ><path d="M0 5h5v-5z" fill="#404040"/></svg>
<div class="a" style="left:30px;top:805px;width:5px;height:1px;background:repeating-linear-gradient(90deg,#909090 0,#909090 1px,transparent 1px,transparent 2px)"></div>
<span class="t" id="t43" style="left:54px;top:812.5px;font-size:12.5px;letter-spacing:-1.11px;">ラン 1</span>
<svg class="a" style="left:42px;top:817px" width="5" height="5" viewBox="0 0 5 5" ><path d="M0 5h5v-5z" fill="#404040"/></svg>
<div class="a" style="left:48px;top:819px;width:3px;height:1px;background:repeating-linear-gradient(90deg,#909090 0,#909090 1px,transparent 1px,transparent 2px)"></div>
<span class="t" id="t44" style="left:73px;top:826.5px;font-size:12.5px;letter-spacing:-1.10px;">シーケンス荷重 1</span>
<svg class="a" style="left:61px;top:831px" width="5" height="5" viewBox="0 0 5 5" ><path d="M0 5h5v-5z" fill="#404040"/></svg>
<div class="a" style="left:68px;top:833px;width:4px;height:1px;background:repeating-linear-gradient(90deg,#909090 0,#909090 1px,transparent 1px,transparent 2px)"></div>
<span class="t" id="t45" style="left:93px;top:840.5px;font-size:12.5px;letter-spacing:-0.55px;">単調増加 &lt;死荷重合計&gt;</span>
<div class="a" style="left:82px;top:847px;width:9px;height:1px;background:repeating-linear-gradient(90deg,#909090 0,#909090 1px,transparent 1px,transparent 2px)"></div>
<span class="t" id="t46" style="left:93px;top:854.5px;font-size:12.5px;letter-spacing:-0.47px;">単調増加 &lt;水平震度荷重 X&#x27; (+)&gt;</span>
<div class="a" style="left:82px;top:861px;width:9px;height:1px;background:repeating-linear-gradient(90deg,#909090 0,#909090 1px,transparent 1px,transparent 2px)"></div>
<div class="a" style="left:24px;top:712px;width:1px;height:58px;background:repeating-linear-gradient(180deg,#909090 0,#909090 1px,transparent 1px,transparent 2px)"></div>
<div class="a" style="left:43px;top:714px;width:1px;height:50px;background:repeating-linear-gradient(180deg,#909090 0,#909090 1px,transparent 1px,transparent 2px)"></div>
<div class="a" style="left:24px;top:782px;width:1px;height:16px;background:repeating-linear-gradient(180deg,#909090 0,#909090 1px,transparent 1px,transparent 2px)"></div>
<div class="a" style="left:43px;top:782px;width:1px;height:10px;background:repeating-linear-gradient(180deg,#909090 0,#909090 1px,transparent 1px,transparent 2px)"></div>
<div class="a" style="left:43px;top:805px;width:1px;height:5px;background:repeating-linear-gradient(180deg,#909090 0,#909090 1px,transparent 1px,transparent 2px)"></div>
<div class="a" style="left:62px;top:821px;width:1px;height:5px;background:repeating-linear-gradient(180deg,#909090 0,#909090 1px,transparent 1px,transparent 2px)"></div>
<div class="a" style="left:81px;top:839px;width:1px;height:21px;background:repeating-linear-gradient(180deg,#909090 0,#909090 1px,transparent 1px,transparent 2px)"></div>
<div class="a" style="left:284px;top:127px;width:1px;height:843px;background:#a0a0a0"></div>
<div class="a" style="left:287px;top:127px;width:1px;height:843px;background:#a0a0a0"></div>
<div class="a" style="left:285px;top:127px;width:1px;height:843px;background:#fff"></div>
<svg class="a" style="left:292px;top:130px" width="17" height="17" viewBox="0 0 17 17" ><path d="M16 2l-6 7-3.500-3 7-6z" fill="#f0e000" stroke="#806000" stroke-width=".500"/><path d="M10 9l-3 3.500-3.500-3 3.500-3.500z" fill="#f01010"/><path d="M1 13c0-4 5-4 5 0s-5 3-5 0M6 11l1 4" fill="none" stroke="#000" stroke-width="1.800"/><path d="M4 3l1 1M2 6l1 1M8 14l1 1M10 12l1 1" stroke="#000"/></svg>
<div class="a" style="left:289px;top:150px;width:23px;height:20px;border:1px solid #707070;border-radius:4px;background:#e4e4e4;box-shadow:inset 1px 1px 1px #c0c0c0"></div>
<svg class="a" style="left:292px;top:152px" width="17" height="17" viewBox="0 0 17 17" ><path d="M1 15l15-15" stroke="#000" stroke-width="1.300"/><path d="M4 1v6M1.500 5l2.500 3.500 2.500-3.500z" stroke="#f00000" fill="#f00000" stroke-width="1.500"/><path d="M7 12c2-3 3-3 4.500 0s3 2 4.500-1" fill="none" stroke="#0000f0" stroke-width="1.600"/></svg>
<svg class="a" style="left:293px;top:174px" width="15" height="17" viewBox="0 0 15 17" ><path d="M5 0h5v5h3l-5.500 5-5.500-5h3z" fill="#a8a8a8"/><path d="M1 9l6.500 5 6.500-5M1 12l6.500 4 6.500-4" fill="none" stroke="#a8a8a8" stroke-width="1.300"/></svg>
<div class="a" style="left:289px;top:199px;width:23px;height:20px;border:1px solid #707070;border-radius:4px;background:#e4e4e4;box-shadow:inset 1px 1px 1px #c0c0c0"></div>
<svg class="a" style="left:293px;top:205px" width="16" height="8" viewBox="0 0 16 8" ><rect x="0" y="0" width="16" height="7" fill="#f8f000" stroke="#000" stroke-width=".600"/><path d="M2 7v-3M5 7v-2M8 7v-3M11 7v-2M14 7v-3" stroke="#000"/></svg>
<svg class="a" style="left:292px;top:223px" width="17" height="16" viewBox="0 0 17 16" ><path d="M1 7h6l9-6v8l-4 3h-11z" fill="#f00000"/><path d="M16 1v8l-8 0z" fill="#0000e0"/><path d="M1 7l6 4-6 4z" fill="#0000e0"/><path d="M2 7h5l-2 4z" fill="#8020e0"/></svg>
<div class="a" style="left:294px;top:246px;width:13px;height:13px;background:#a0a0a0"></div>
<svg class="a" style="left:292px;top:266px" width="17" height="16" viewBox="0 0 17 16" ><path d="M1 4l9-3 2 2-5 3v3l5 2v3h-11v-3l3-2v-2z" fill="#707070" stroke="#000" stroke-width=".800"/><path d="M10 6l5 5M15 6l-5 5" stroke="#0000f0" stroke-width="1.600"/></svg>
<svg class="a" style="left:292px;top:288px" width="17" height="16" viewBox="0 0 17 16" ><path d="M1 4l9-3 2 2-5 3v3l5 2v3h-11v-3l3-2v-2z" fill="#707070" stroke="#000" stroke-width=".800"/><path d="M0 7l3-1 2 2 3-2 3 2v3h-11z" fill="#f0e000"/><path d="M9 6l5 5M14 6l-5 5" stroke="#0000f0" stroke-width="1.600"/></svg>
<div class="a" style="left:291px;top:311px;width:20px;height:1px;background:#a8a8a8"></div>
<svg class="a" style="left:292px;top:319px" width="17" height="16" viewBox="0 0 17 16" ><circle cx="3" cy="8" r="2.500" fill="#a8a8a8"/><path d="M0 11h16M14 0v11" stroke="#a8a8a8" fill="none"/><path d="M8 11l-4 4h8z" fill="#a8a8a8"/></svg>
<svg class="a" style="left:293px;top:341px" width="16" height="12" viewBox="0 0 16 12" ><path d="M0 11h15M3 11v-3M6 11v-5M9 11v-7M12 11v-9M14.500 11v-11" stroke="#a8a8a8" fill="none"/></svg>
<svg class="a" style="left:293px;top:363px" width="16" height="12" viewBox="0 0 16 12" ><path d="M0 11h15M3 11v-5M6 11v-9M9 11v-4M12 11v-7M14.500 11v-3" stroke="#a8a8a8" fill="none"/></svg>
<div class="a" style="left:314px;top:361px;width:1px;height:18px;background:#a8a8a8"></div>
<div class="a" style="left:291px;top:384px;width:34px;height:1px;background:#a8a8a8"></div>
<svg class="a" style="left:293px;top:393px" width="16" height="15" viewBox="0 0 16 15" ><path d="M8 0v14M1 5h13M1 9h13M4 2v11M12 3v10M8 0l-2 2M8 0l2 2M15 7l-2-2M15 7l-2 2" stroke="#a8a8a8" fill="none" stroke-width="1.200"/></svg>
<svg class="a" style="left:317px;top:398px" width="7" height="4" viewBox="0 0 7 4" ><path d="M0 0h7l-3.500 4z" fill="#606060"/></svg>
<svg class="a" style="left:293px;top:454px" width="14" height="7" viewBox="0 0 14 7" ><path d="M0 3.500h13M10 .5l3 3-3 3" stroke="#a8a8a8" fill="none"/></svg>
<span class="t" id="t47" style="left:295px;top:461px;font-size:9.5px;color:#a8a8a8;letter-spacing:-.5px">xP</span>
<svg class="a" style="left:293px;top:475.5px" width="14" height="7" viewBox="0 0 14 7" ><path d="M0 3.500h13M10 .5l3 3-3 3" stroke="#a8a8a8" fill="none"/></svg>
<span class="t" id="t48" style="left:295px;top:482.5px;font-size:9.5px;color:#a8a8a8;letter-spacing:-.5px">yP</span>
<svg class="a" style="left:293px;top:498px" width="14" height="7" viewBox="0 0 14 7" ><path d="M0 3.500h13M10 .5l3 3-3 3" stroke="#a8a8a8" fill="none"/></svg>
<span class="t" id="t49" style="left:295px;top:505px;font-size:9.5px;color:#a8a8a8;letter-spacing:-.5px">zP</span>
<svg class="a" style="left:293px;top:521px" width="14" height="8" viewBox="0 0 14 8" ><path d="M1 7c0-7 10-7 11-1M12 6l-3-1M12 6l1.500-3" stroke="#a8a8a8" fill="none" stroke-width="1.200"/></svg>
<span class="t" id="t50" style="left:295px;top:528px;font-size:9.5px;color:#a8a8a8;letter-spacing:-.5px">xP</span>
<svg class="a" style="left:293px;top:543px" width="14" height="8" viewBox="0 0 14 8" ><path d="M1 7c0-7 10-7 11-1M12 6l-3-1M12 6l1.500-3" stroke="#a8a8a8" fill="none" stroke-width="1.200"/></svg>
<span class="t" id="t51" style="left:295px;top:550px;font-size:9.5px;color:#a8a8a8;letter-spacing:-.5px">yP</span>
<svg class="a" style="left:293px;top:565px" width="14" height="8" viewBox="0 0 14 8" ><path d="M1 7c0-7 10-7 11-1M12 6l-3-1M12 6l1.500-3" stroke="#a8a8a8" fill="none" stroke-width="1.200"/></svg>
<span class="t" id="t52" style="left:295px;top:572px;font-size:9.5px;color:#a8a8a8;letter-spacing:-.5px">zP</span>
<svg class="a" style="left:293px;top:585.5px" width="14" height="7" viewBox="0 0 14 7" ><path d="M0 3.500h13M10 .5l3 3-3 3" stroke="#a8a8a8" fill="none"/></svg>
<span class="t" id="t53" style="left:295px;top:592.5px;font-size:9.5px;color:#a8a8a8;letter-spacing:-.5px">εa</span>
<svg class="a" style="left:293px;top:608px" width="14" height="8" viewBox="0 0 14 8" ><path d="M1 7c0-7 10-7 11-1M12 6l-3-1M12 6l1.500-3" stroke="#a8a8a8" fill="none" stroke-width="1.200"/></svg>
<span class="t" id="t54" style="left:291px;top:615px;font-size:9.5px;color:#a8a8a8;letter-spacing:-.5px">ΦyP</span>
<svg class="a" style="left:293px;top:630px" width="14" height="8" viewBox="0 0 14 8" ><path d="M1 7c0-7 10-7 11-1M12 6l-3-1M12 6l1.500-3" stroke="#a8a8a8" fill="none" stroke-width="1.200"/></svg>
<span class="t" id="t55" style="left:291px;top:637px;font-size:9.5px;color:#a8a8a8;letter-spacing:-.5px">ΦzP</span>
<div class="a" style="left:333px;top:135px;width:16px;height:16px;background:#fff"></div>
<svg class="a" style="left:334px;top:136px" width="15" height="15" viewBox="0 0 15 15" ><path d="M.500 .5v13l13-6.500z" fill="#00e000" stroke="#000" stroke-width=".800"/></svg>
<div class="a" style="left:359px;top:137px;width:12px;height:12px;background:#000"></div>
<svg class="a" style="left:387px;top:137px" width="12" height="12" viewBox="0 0 12 12" ><path d="M7 0v12l-7-6z" fill="#000"/><rect x="8.500" y="0" width="3" height="12" fill="#000"/></svg>
<svg class="a" style="left:412px;top:137px" width="12" height="12" viewBox="0 0 12 12" ><path d="M5 0v12l7-6z" fill="#a8a8a8"/><rect x=".500" y="0" width="3" height="12" fill="#a8a8a8"/></svg>
<div class="a" style="left:435px;top:137px;width:12px;height:12px;background:#000;border-radius:50%"></div>
<span class="t" id="t56" style="left:329px;top:164.5px;font-size:12.5px;letter-spacing:-0.05px;">ｽﾃｯﾌﾟ</span>
<div class="a" style="left:362px;top:160px;width:40px;height:19px;border:1px solid #dfe6f0;border-radius:2px;background:#f4f4f4"></div>
<span class="t" id="t57" style="left:364px;top:164.5px;font-size:12.5px;letter-spacing:-0.95px;">898</span>
<svg class="a" style="left:410px;top:165px" width="15" height="12" viewBox="0 0 15 12" ><path d="M0 0v12l6-6zM6 0v12l6-6z" fill="#a8a8a8"/><rect x="12.500" y="0" width="2.500" height="12" fill="#a8a8a8"/></svg>
<svg class="a" style="left:433px;top:163px" width="17" height="17" viewBox="0 0 17 17" ><rect x="3" y="6" width="9" height="7" fill="#808080" stroke="#000"/><path d="M12 9l4-2.500v7l-4-2.500z" fill="#808080" stroke="#000"/><path d="M3 1l4 5" stroke="#000" stroke-width="1.500"/><circle cx="4" cy="4" r="1.500" fill="#fff" stroke="#000"/><path d="M1 15.500h12" stroke="#000" stroke-width="2"/><rect x="4" y="10" width="2" height="2" fill="#f00000"/><rect x="7" y="10" width="2" height="2" fill="#00c000"/></svg>
<div class="a" style="left:458px;top:127px;width:1px;height:58px;background:#a0a0a0"></div>
<div class="a" style="left:459px;top:127px;width:1px;height:58px;background:#fff"></div>
<svg class="a" style="left:460px;top:126px" width="816" height="18" viewBox="0 0 816 18" ><path d="M6.5 15v2M14.5 15v2M22.5 15v2M30.5 1v16M38.5 15v2M46.5 15v2M54.5 15v2M62.5 15v2M70.5 13v4M78.5 15v2M86.5 15v2M94.5 15v2M102.5 15v2M110.5 1v16M118.5 15v2M126.5 15v2M134.5 15v2M142.5 15v2M150.5 13v4M158.5 15v2M166.5 15v2M174.5 15v2M182.5 15v2M190.5 1v16M198.5 15v2M206.5 15v2M214.5 15v2M222.5 15v2M230.5 13v4M238.5 15v2M246.5 15v2M254.5 15v2M262.5 15v2M270.5 1v16M278.5 15v2M286.5 15v2M294.5 15v2M302.5 15v2M310.5 13v4M318.5 15v2M326.5 15v2M334.5 15v2M342.5 15v2M350.5 1v16M358.5 15v2M366.5 15v2M374.5 15v2M382.5 15v2M390.5 13v4M398.5 15v2M406.5 15v2M414.5 15v2M422.5 15v2M430.5 1v16M438.5 15v2M446.5 15v2M454.5 15v2M462.5 15v2M470.5 13v4M478.5 15v2M486.5 15v2M494.5 15v2M502.5 15v2M510.5 1v16M518.5 15v2M526.5 15v2M534.5 15v2M542.5 15v2M550.5 13v4M558.5 15v2M566.5 15v2M574.5 15v2M582.5 15v2M590.5 1v16M598.5 15v2M606.5 15v2M614.5 15v2M622.5 15v2M630.5 13v4M638.5 15v2M646.5 15v2M654.5 15v2M662.5 15v2M670.5 1v16M678.5 15v2M686.5 15v2M694.5 15v2M702.5 15v2M710.5 13v4M718.5 15v2M726.5 15v2M734.5 15v2M742.5 15v2M750.5 1v16M758.5 15v2M766.5 15v2M774.5 15v2M782.5 15v2M790.5 13v4M798.5 15v2M806.5 15v2" stroke="#707070" stroke-width="1" fill="none" shape-rendering="crispEdges"/><path d="M0 17.500h815" stroke="#707070" shape-rendering="crispEdges"/></svg>
<span class="t" id="t58" style="left:467.5px;top:129px;color:#585858;width:20px;text-align:right;letter-spacing:-.6px">800</span>
<span class="t" id="t59" style="left:547.5px;top:129px;color:#585858;width:20px;text-align:right;letter-spacing:-.6px">810</span>
<span class="t" id="t60" style="left:627.5px;top:129px;color:#585858;width:20px;text-align:right;letter-spacing:-.6px">820</span>
<span class="t" id="t61" style="left:707.5px;top:129px;color:#585858;width:20px;text-align:right;letter-spacing:-.6px">830</span>
<span class="t" id="t62" style="left:787.5px;top:129px;color:#585858;width:20px;text-align:right;letter-spacing:-.6px">840</span>
<span class="t" id="t63" style="left:867.5px;top:129px;color:#585858;width:20px;text-align:right;letter-spacing:-.6px">850</span>
<span class="t" id="t64" style="left:947.5px;top:129px;color:#585858;width:20px;text-align:right;letter-spacing:-.6px">860</span>
<span class="t" id="t65" style="left:1027.5px;top:129px;color:#585858;width:20px;text-align:right;letter-spacing:-.6px">870</span>
<span class="t" id="t66" style="left:1107.5px;top:129px;color:#585858;width:20px;text-align:right;letter-spacing:-.6px">880</span>
<span class="t" id="t67" style="left:1187.5px;top:129px;color:#585858;width:20px;text-align:right;letter-spacing:-.6px">890</span>
<div class="a" style="left:1267px;top:127px;width:7px;height:17px;background:#00e000"></div>
<div class="a" style="left:1274px;top:127px;width:1px;height:57px;background:#909090"></div>
<div class="a" style="left:1278px;top:96px;width:2px;height:876px;background:#909090"></div>
<div class="a" style="left:460px;top:162px;width:815px;height:2px;background:#808080"></div>
<div class="a" style="left:465px;top:169px;width:709px;height:10px;background:#fff"></div>
<div class="a" style="left:1177px;top:168px;width:95px;height:13px;background:#fff;border:1px solid #000;border-width:1px 1px 2px 2px"></div>
<div class="a" style="left:1267px;top:166px;width:5px;height:16px;background:linear-gradient(90deg,#00e000 0,#00e000 70%,#007000 100%)"></div>
<div class="a" style="left:325px;top:183px;width:951px;height:786px;background:#fff;border:2px solid #808080;border-left:1px solid #808080;border-top:2px solid #808080"></div>
<svg class="a" style="left:326px;top:185px" width="942" height="783" viewBox="326 185 942 783" shape-rendering="crispEdges"><defs><linearGradient id="g1" gradientUnits="userSpaceOnUse" x1="672.7" y1="440.6" x2="661.7" y2="466.2"><stop offset="0" stop-color="#2aa48c"/><stop offset="1" stop-color="#08805a"/></linearGradient><linearGradient id="g2" gradientUnits="userSpaceOnUse" x1="694.4" y1="449.9" x2="705.1" y2="473.9"><stop offset="0" stop-color="#34b298"/><stop offset="0.7" stop-color="#128c66"/><stop offset="1" stop-color="#087c56"/></linearGradient><linearGradient id="g3" gradientUnits="userSpaceOnUse" x1="749.9" y1="425.0" x2="739.5" y2="451.3"><stop offset="0" stop-color="#3cc0a8"/><stop offset="1" stop-color="#11a276"/></linearGradient><linearGradient id="g4" gradientUnits="userSpaceOnUse" x1="773.3" y1="434.4" x2="784.9" y2="456.6"><stop offset="0" stop-color="#2a9c8a"/><stop offset="1" stop-color="#0c8a62"/></linearGradient><linearGradient id="g5" gradientUnits="userSpaceOnUse" x1="671.2" y1="470.2" x2="660.1" y2="495.7"><stop offset="0" stop-color="#2aa48c"/><stop offset="1" stop-color="#08805a"/></linearGradient><linearGradient id="g6" gradientUnits="userSpaceOnUse" x1="692.6" y1="479.5" x2="703.4" y2="503.5"><stop offset="0" stop-color="#34b298"/><stop offset="0.7" stop-color="#128c66"/><stop offset="1" stop-color="#087c56"/></linearGradient><linearGradient id="g7" gradientUnits="userSpaceOnUse" x1="748.0" y1="454.7" x2="737.3" y2="480.7"><stop offset="0" stop-color="#3cc0a8"/><stop offset="1" stop-color="#11a276"/></linearGradient><linearGradient id="g8" gradientUnits="userSpaceOnUse" x1="770.7" y1="464.0" x2="782.4" y2="486.2"><stop offset="0" stop-color="#2a9c8a"/><stop offset="1" stop-color="#0c8a62"/></linearGradient><linearGradient id="g9" gradientUnits="userSpaceOnUse" x1="669.7" y1="499.8" x2="659.1" y2="524.0"><stop offset="0" stop-color="#2aa48c"/><stop offset="1" stop-color="#08805a"/></linearGradient><linearGradient id="g10" gradientUnits="userSpaceOnUse" x1="690.9" y1="509.1" x2="701.2" y2="531.9"><stop offset="0" stop-color="#34b298"/><stop offset="0.7" stop-color="#128c66"/><stop offset="1" stop-color="#087c56"/></linearGradient><linearGradient id="g11" gradientUnits="userSpaceOnUse" x1="746.0" y1="484.3" x2="735.7" y2="508.9"><stop offset="0" stop-color="#3cc0a8"/><stop offset="1" stop-color="#11a276"/></linearGradient><linearGradient id="g12" gradientUnits="userSpaceOnUse" x1="768.2" y1="493.6" x2="779.3" y2="514.7"><stop offset="0" stop-color="#2a9c8a"/><stop offset="1" stop-color="#0c8a62"/></linearGradient><linearGradient id="g13" gradientUnits="userSpaceOnUse" x1="668.3" y1="528.0" x2="658.7" y2="549.8"><stop offset="0" stop-color="#2aa48c"/><stop offset="1" stop-color="#08805a"/></linearGradient><linearGradient id="g14" gradientUnits="userSpaceOnUse" x1="689.2" y1="537.3" x2="698.5" y2="557.8"><stop offset="0" stop-color="#34b298"/><stop offset="0.7" stop-color="#128c66"/><stop offset="1" stop-color="#087c56"/></linearGradient><linearGradient id="g15" gradientUnits="userSpaceOnUse" x1="744.1" y1="512.5" x2="734.7" y2="534.5"><stop offset="0" stop-color="#3cc0a8"/><stop offset="1" stop-color="#11a276"/></linearGradient><linearGradient id="g16" gradientUnits="userSpaceOnUse" x1="765.8" y1="521.8" x2="775.8" y2="540.8"><stop offset="0" stop-color="#2a9c8a"/><stop offset="1" stop-color="#0c8a62"/></linearGradient><linearGradient id="g17" gradientUnits="userSpaceOnUse" x1="667.1" y1="553.4" x2="656.8" y2="576.3"><stop offset="0" stop-color="#2aa48c"/><stop offset="1" stop-color="#08805a"/></linearGradient><linearGradient id="g18" gradientUnits="userSpaceOnUse" x1="687.8" y1="562.7" x2="697.6" y2="584.3"><stop offset="0" stop-color="#34b298"/><stop offset="0.7" stop-color="#128c66"/><stop offset="1" stop-color="#087c56"/></linearGradient><linearGradient id="g19" gradientUnits="userSpaceOnUse" x1="742.5" y1="537.9" x2="732.3" y2="561.0"><stop offset="0" stop-color="#3cc0a8"/><stop offset="1" stop-color="#11a276"/></linearGradient><linearGradient id="g20" gradientUnits="userSpaceOnUse" x1="763.6" y1="547.2" x2="774.2" y2="567.2"><stop offset="0" stop-color="#2a9c8a"/><stop offset="1" stop-color="#0c8a62"/></linearGradient><linearGradient id="g21" gradientUnits="userSpaceOnUse" x1="665.7" y1="580.2" x2="656.5" y2="600.6"><stop offset="0" stop-color="#2aa48c"/><stop offset="1" stop-color="#08805a"/></linearGradient><linearGradient id="g22" gradientUnits="userSpaceOnUse" x1="686.2" y1="589.5" x2="695.0" y2="608.8"><stop offset="0" stop-color="#34b298"/><stop offset="0.7" stop-color="#128c66"/><stop offset="1" stop-color="#087c56"/></linearGradient><linearGradient id="g23" gradientUnits="userSpaceOnUse" x1="740.7" y1="564.7" x2="731.4" y2="585.2"><stop offset="0" stop-color="#3cc0a8"/><stop offset="1" stop-color="#11a276"/></linearGradient><linearGradient id="g24" gradientUnits="userSpaceOnUse" x1="761.3" y1="574.0" x2="770.8" y2="591.8"><stop offset="0" stop-color="#2a9c8a"/><stop offset="1" stop-color="#0c8a62"/></linearGradient><linearGradient id="g25" gradientUnits="userSpaceOnUse" x1="664.5" y1="604.2" x2="655.2" y2="624.5"><stop offset="0" stop-color="#2aa48c"/><stop offset="1" stop-color="#08805a"/></linearGradient><linearGradient id="g26" gradientUnits="userSpaceOnUse" x1="684.8" y1="613.5" x2="693.6" y2="632.8"><stop offset="0" stop-color="#34b298"/><stop offset="0.7" stop-color="#128c66"/><stop offset="1" stop-color="#087c56"/></linearGradient><linearGradient id="g27" gradientUnits="userSpaceOnUse" x1="739.1" y1="588.7" x2="729.7" y2="609.0"><stop offset="0" stop-color="#3cc0a8"/><stop offset="1" stop-color="#11a276"/></linearGradient><linearGradient id="g28" gradientUnits="userSpaceOnUse" x1="759.2" y1="598.0" x2="768.7" y2="615.8"><stop offset="0" stop-color="#2a9c8a"/><stop offset="1" stop-color="#0c8a62"/></linearGradient><linearGradient id="g29" gradientUnits="userSpaceOnUse" x1="663.3" y1="628.2" x2="655.0" y2="646.0"><stop offset="0" stop-color="#2aa48c"/><stop offset="1" stop-color="#08805a"/></linearGradient><linearGradient id="g30" gradientUnits="userSpaceOnUse" x1="683.4" y1="637.5" x2="691.2" y2="654.5"><stop offset="0" stop-color="#34b298"/><stop offset="0.7" stop-color="#128c66"/><stop offset="1" stop-color="#087c56"/></linearGradient><linearGradient id="g31" gradientUnits="userSpaceOnUse" x1="737.5" y1="612.6" x2="729.1" y2="630.4"><stop offset="0" stop-color="#3cc0a8"/><stop offset="1" stop-color="#11a276"/></linearGradient><linearGradient id="g32" gradientUnits="userSpaceOnUse" x1="757.2" y1="621.9" x2="765.5" y2="637.6"><stop offset="0" stop-color="#2a9c8a"/><stop offset="1" stop-color="#0c8a62"/></linearGradient><linearGradient id="g33" gradientUnits="userSpaceOnUse" x1="662.3" y1="649.3" x2="652.8" y2="669.5"><stop offset="0" stop-color="#2aa48c"/><stop offset="1" stop-color="#08805a"/></linearGradient><linearGradient id="g34" gradientUnits="userSpaceOnUse" x1="682.2" y1="658.6" x2="691.0" y2="677.9"><stop offset="0" stop-color="#34b298"/><stop offset="0.7" stop-color="#128c66"/><stop offset="1" stop-color="#087c56"/></linearGradient><linearGradient id="g35" gradientUnits="userSpaceOnUse" x1="736.1" y1="633.8" x2="726.4" y2="653.8"><stop offset="0" stop-color="#3cc0a8"/><stop offset="1" stop-color="#11a276"/></linearGradient><linearGradient id="g36" gradientUnits="userSpaceOnUse" x1="755.3" y1="643.1" x2="764.9" y2="660.9"><stop offset="0" stop-color="#2a9c8a"/><stop offset="1" stop-color="#0c8a62"/></linearGradient><linearGradient id="g37" gradientUnits="userSpaceOnUse" x1="661.1" y1="673.3" x2="651.6" y2="693.4"><stop offset="0" stop-color="#2aa48c"/><stop offset="1" stop-color="#08805a"/></linearGradient><linearGradient id="g38" gradientUnits="userSpaceOnUse" x1="680.8" y1="682.6" x2="689.6" y2="701.8"><stop offset="0" stop-color="#34b298"/><stop offset="0.7" stop-color="#128c66"/><stop offset="1" stop-color="#087c56"/></linearGradient><linearGradient id="g39" gradientUnits="userSpaceOnUse" x1="734.6" y1="657.8" x2="724.7" y2="677.6"><stop offset="0" stop-color="#3cc0a8"/><stop offset="1" stop-color="#11a276"/></linearGradient><linearGradient id="g40" gradientUnits="userSpaceOnUse" x1="753.3" y1="667.1" x2="762.8" y2="684.8"><stop offset="0" stop-color="#2a9c8a"/><stop offset="1" stop-color="#0c8a62"/></linearGradient><linearGradient id="g41" gradientUnits="userSpaceOnUse" x1="915.8" y1="521.6" x2="903.1" y2="550.2"><stop offset="0" stop-color="#4accbc"/><stop offset="1" stop-color="#10a878"/></linearGradient><linearGradient id="g42" gradientUnits="userSpaceOnUse" x1="944.5" y1="534.2" x2="954.6" y2="557.1"><stop offset="0" stop-color="#2e8c84"/><stop offset="1" stop-color="#08805c"/></linearGradient><linearGradient id="g43" gradientUnits="userSpaceOnUse" x1="908.6" y1="552.4" x2="895.0" y2="582.5"><stop offset="0" stop-color="#4accbc"/><stop offset="1" stop-color="#10a878"/></linearGradient><linearGradient id="g44" gradientUnits="userSpaceOnUse" x1="936.7" y1="565.1" x2="947.7" y2="588.7"><stop offset="0" stop-color="#2e8c84"/><stop offset="1" stop-color="#08805c"/></linearGradient><linearGradient id="g45" gradientUnits="userSpaceOnUse" x1="901.1" y1="584.9" x2="888.0" y2="613.3"><stop offset="0" stop-color="#4accbc"/><stop offset="1" stop-color="#10a878"/></linearGradient><linearGradient id="g46" gradientUnits="userSpaceOnUse" x1="928.5" y1="597.6" x2="939.1" y2="619.5"><stop offset="0" stop-color="#2e8c84"/><stop offset="1" stop-color="#08805c"/></linearGradient><linearGradient id="g47" gradientUnits="userSpaceOnUse" x1="893.9" y1="615.8" x2="881.3" y2="642.4"><stop offset="0" stop-color="#4accbc"/><stop offset="1" stop-color="#10a878"/></linearGradient><linearGradient id="g48" gradientUnits="userSpaceOnUse" x1="920.7" y1="628.4" x2="930.9" y2="648.6"><stop offset="0" stop-color="#2e8c84"/><stop offset="1" stop-color="#08805c"/></linearGradient><linearGradient id="g49" gradientUnits="userSpaceOnUse" x1="887.2" y1="644.9" x2="874.4" y2="671.3"><stop offset="0" stop-color="#4accbc"/><stop offset="1" stop-color="#10a878"/></linearGradient><linearGradient id="g50" gradientUnits="userSpaceOnUse" x1="913.3" y1="657.5" x2="923.7" y2="677.3"><stop offset="0" stop-color="#2e8c84"/><stop offset="1" stop-color="#08805c"/></linearGradient><linearGradient id="g51" gradientUnits="userSpaceOnUse" x1="880.4" y1="674.0" x2="868.2" y2="698.7"><stop offset="0" stop-color="#4accbc"/><stop offset="1" stop-color="#10a878"/></linearGradient><linearGradient id="g52" gradientUnits="userSpaceOnUse" x1="906.0" y1="686.6" x2="915.9" y2="704.9"><stop offset="0" stop-color="#2e8c84"/><stop offset="1" stop-color="#08805c"/></linearGradient><linearGradient id="g53" gradientUnits="userSpaceOnUse" x1="874.1" y1="701.4" x2="861.6" y2="725.9"><stop offset="0" stop-color="#4accbc"/><stop offset="1" stop-color="#10a878"/></linearGradient><linearGradient id="g54" gradientUnits="userSpaceOnUse" x1="899.0" y1="714.0" x2="909.1" y2="732.0"><stop offset="0" stop-color="#2e8c84"/><stop offset="1" stop-color="#08805c"/></linearGradient><linearGradient id="g55" gradientUnits="userSpaceOnUse" x1="867.7" y1="728.8" x2="854.3" y2="754.7"><stop offset="0" stop-color="#4accbc"/><stop offset="1" stop-color="#10a878"/></linearGradient><linearGradient id="g56" gradientUnits="userSpaceOnUse" x1="892.1" y1="741.4" x2="902.9" y2="760.1"><stop offset="0" stop-color="#2e8c84"/><stop offset="1" stop-color="#08805c"/></linearGradient><linearGradient id="g57" gradientUnits="userSpaceOnUse" x1="861.0" y1="757.9" x2="846.8" y2="784.5"><stop offset="0" stop-color="#4accbc"/><stop offset="1" stop-color="#10a878"/></linearGradient><linearGradient id="g58" gradientUnits="userSpaceOnUse" x1="884.8" y1="770.5" x2="896.0" y2="789.5"><stop offset="0" stop-color="#2e8c84"/><stop offset="1" stop-color="#08805c"/></linearGradient><linearGradient id="g59" gradientUnits="userSpaceOnUse" x1="854.0" y1="788.0" x2="842.9" y2="808.4"><stop offset="0" stop-color="#4accbc"/><stop offset="1" stop-color="#10a878"/></linearGradient><linearGradient id="g60" gradientUnits="userSpaceOnUse" x1="877.2" y1="800.7" x2="888.8" y2="819.9"><stop offset="0" stop-color="#2e8c84"/><stop offset="1" stop-color="#08805c"/></linearGradient><linearGradient id="g61" gradientUnits="userSpaceOnUse" x1="762.0" y1="311.0" x2="767.0" y2="329.1"><stop offset="0" stop-color="#2c7890"/><stop offset="0.42" stop-color="#66708c"/><stop offset="1" stop-color="#c06088"/></linearGradient><linearGradient id="g62" gradientUnits="userSpaceOnUse" x1="843.4" y1="328.7" x2="846.6" y2="339.1"><stop offset="0" stop-color="#2e8474"/><stop offset="1" stop-color="#0a6a48"/></linearGradient><linearGradient id="g63" gradientUnits="userSpaceOnUse" x1="863.1" y1="333.0" x2="866.0" y2="342.2"><stop offset="0" stop-color="#2e8474"/><stop offset="1" stop-color="#0a6a48"/></linearGradient><linearGradient id="g64" gradientUnits="userSpaceOnUse" x1="880.3" y1="336.8" x2="882.9" y2="344.5"><stop offset="0" stop-color="#2e8474"/><stop offset="1" stop-color="#0a6a48"/></linearGradient><linearGradient id="g65" gradientUnits="userSpaceOnUse" x1="894.5" y1="339.8" x2="898.5" y2="351.7"><stop offset="0" stop-color="#2e8474"/><stop offset="1" stop-color="#0a6a48"/></linearGradient><linearGradient id="g66" gradientUnits="userSpaceOnUse" x1="915.8" y1="344.5" x2="919.9" y2="356.0"><stop offset="0" stop-color="#2e8474"/><stop offset="1" stop-color="#0a6a48"/></linearGradient><linearGradient id="g67" gradientUnits="userSpaceOnUse" x1="936.6" y1="349.0" x2="941.2" y2="361.5"><stop offset="0" stop-color="#2e8474"/><stop offset="1" stop-color="#0a6a48"/></linearGradient><linearGradient id="g68" gradientUnits="userSpaceOnUse" x1="958.1" y1="353.7" x2="961.7" y2="363.1"><stop offset="0" stop-color="#2e8474"/><stop offset="1" stop-color="#0a6a48"/></linearGradient><linearGradient id="g69" gradientUnits="userSpaceOnUse" x1="974.4" y1="357.2" x2="979.2" y2="369.4"><stop offset="0" stop-color="#2e8474"/><stop offset="1" stop-color="#0a6a48"/></linearGradient><linearGradient id="g70" gradientUnits="userSpaceOnUse" x1="995.1" y1="361.7" x2="998.6" y2="370.2"><stop offset="0" stop-color="#2e8474"/><stop offset="1" stop-color="#0a6a48"/></linearGradient><linearGradient id="g71" gradientUnits="userSpaceOnUse" x1="1008.9" y1="364.8" x2="1011.5" y2="370.9"><stop offset="0" stop-color="#2e8474"/><stop offset="1" stop-color="#0a6a48"/></linearGradient><linearGradient id="g72" gradientUnits="userSpaceOnUse" x1="1077.1" y1="379.6" x2="1091.6" y2="411.3"><stop offset="0" stop-color="#2c78a0"/><stop offset="0.55" stop-color="#7a6890"/><stop offset="1" stop-color="#b45c86"/></linearGradient><linearGradient id="g73" gradientUnits="userSpaceOnUse" x1="574.5" y1="0.0" x2="610.0" y2="0.0"><stop offset="0" stop-color="#48a0dc"/><stop offset="1" stop-color="#f07cac"/></linearGradient><linearGradient id="g74" gradientUnits="userSpaceOnUse" x1="610.0" y1="0.0" x2="655.5" y2="0.0"><stop offset="0" stop-color="#0078f0"/><stop offset="1" stop-color="#0070e4"/></linearGradient><linearGradient id="g75" gradientUnits="userSpaceOnUse" x1="655.5" y1="0.0" x2="676.0" y2="0.0"><stop offset="0" stop-color="#44c4ac"/><stop offset="1" stop-color="#0ea06c"/></linearGradient><linearGradient id="g76" gradientUnits="userSpaceOnUse" x1="676.0" y1="0.0" x2="694.0" y2="0.0"><stop offset="0" stop-color="#44c4ac"/><stop offset="1" stop-color="#0ea06c"/></linearGradient><linearGradient id="g77" gradientUnits="userSpaceOnUse" x1="694.0" y1="0.0" x2="708.8" y2="0.0"><stop offset="0" stop-color="#44c4ac"/><stop offset="1" stop-color="#0ea06c"/></linearGradient><linearGradient id="g78" gradientUnits="userSpaceOnUse" x1="708.8" y1="0.0" x2="731.0" y2="0.0"><stop offset="0" stop-color="#44c4ac"/><stop offset="1" stop-color="#0ea06c"/></linearGradient><linearGradient id="g79" gradientUnits="userSpaceOnUse" x1="731.0" y1="0.0" x2="752.6" y2="0.0"><stop offset="0" stop-color="#44c4ac"/><stop offset="1" stop-color="#0ea06c"/></linearGradient><linearGradient id="g80" gradientUnits="userSpaceOnUse" x1="752.6" y1="0.0" x2="775.0" y2="0.0"><stop offset="0" stop-color="#44c4ac"/><stop offset="1" stop-color="#0ea06c"/></linearGradient><linearGradient id="g81" gradientUnits="userSpaceOnUse" x1="775.0" y1="0.0" x2="792.0" y2="0.0"><stop offset="0" stop-color="#44c4ac"/><stop offset="1" stop-color="#0ea06c"/></linearGradient><linearGradient id="g82" gradientUnits="userSpaceOnUse" x1="792.0" y1="0.0" x2="813.6" y2="0.0"><stop offset="0" stop-color="#44c4ac"/><stop offset="1" stop-color="#0ea06c"/></linearGradient><linearGradient id="g83" gradientUnits="userSpaceOnUse" x1="813.6" y1="0.0" x2="828.0" y2="0.0"><stop offset="0" stop-color="#44c4ac"/><stop offset="1" stop-color="#0ea06c"/></linearGradient><linearGradient id="g84" gradientUnits="userSpaceOnUse" x1="828.0" y1="0.0" x2="839.4" y2="0.0"><stop offset="0" stop-color="#44c4ac"/><stop offset="1" stop-color="#0ea06c"/></linearGradient><linearGradient id="g85" gradientUnits="userSpaceOnUse" x1="839.4" y1="0.0" x2="901.0" y2="0.0"><stop offset="0" stop-color="#0078f0"/><stop offset="1" stop-color="#0070e4"/></linearGradient><linearGradient id="g86" gradientUnits="userSpaceOnUse" x1="901.0" y1="0.0" x2="957.5" y2="0.0"><stop offset="0" stop-color="#44acec"/><stop offset="1" stop-color="#f684b8"/></linearGradient><linearGradient id="g87" gradientUnits="userSpaceOnUse" x1="957.5" y1="475.5" x2="1129.5" y2="448.5"><stop offset="0" stop-color="#c06492"/><stop offset="1" stop-color="#ac5880"/></linearGradient></defs><polyline points="646.0,441.0 661.0,690.0" fill="none" stroke="#22b08a" stroke-width="1" />
<polyline points="665.0,445.0 668.0,500.0" fill="none" stroke="#22b08a" stroke-width="1" />
<polyline points="665.9,447.8 646.9,454.3 665.9,462.3" fill="none" stroke="#22b08a" stroke-width="1" />
<polyline points="667.9,478.0 648.9,484.5 667.9,492.5" fill="none" stroke="#22b08a" stroke-width="1" />
<polyline points="669.8,506.8 650.8,513.3 669.8,521.3" fill="none" stroke="#22b08a" stroke-width="1" />
<polyline points="671.7,535.5 652.7,542.0 671.7,550.0" fill="none" stroke="#22b08a" stroke-width="1" />
<polyline points="673.6,564.5 654.6,571.0 673.6,579.0" fill="none" stroke="#22b08a" stroke-width="1" />
<polyline points="675.5,591.9 656.5,598.4 675.5,606.4" fill="none" stroke="#22b08a" stroke-width="1" />
<polyline points="677.1,616.8 658.1,623.3 677.1,631.3" fill="none" stroke="#22b08a" stroke-width="1" />
<polyline points="678.9,643.5 659.9,650.0 678.9,658.0" fill="none" stroke="#22b08a" stroke-width="1" />
<polyline points="862.0,513.0 854.3,812.0" fill="none" stroke="#22b08a" stroke-width="1" />
<polyline points="886.5,520.0 879.0,812.0" fill="none" stroke="#22b08a" stroke-width="1" />
<polyline points="895.8,523.0 892.5,633.0" fill="none" stroke="#22b08a" stroke-width="1" />
<polyline points="887.0,528.2 861.3,539.9 886.0,549.9 912.0,537.9" fill="none" stroke="#22b08a" stroke-width="1" />
<polyline points="896.0,531.9 912.0,525.9" fill="none" stroke="#22b08a" stroke-width="1" />
<polyline points="886.2,559.7 860.5,571.4 885.2,581.4 911.2,569.4" fill="none" stroke="#22b08a" stroke-width="1" />
<polyline points="895.2,563.4 911.2,557.4" fill="none" stroke="#22b08a" stroke-width="1" />
<polyline points="885.3,592.9 859.6,604.6 884.3,614.6 910.3,602.6" fill="none" stroke="#22b08a" stroke-width="1" />
<polyline points="894.3,596.6 910.3,590.6" fill="none" stroke="#22b08a" stroke-width="1" />
<polyline points="884.5,626.1 858.8,637.8 883.5,647.8 909.5,635.8" fill="none" stroke="#22b08a" stroke-width="1" />
<polyline points="893.5,629.8 909.5,623.8" fill="none" stroke="#22b08a" stroke-width="1" />
<polyline points="883.7,657.7 858.0,669.4 882.7,679.4 908.7,667.4" fill="none" stroke="#22b08a" stroke-width="1" />
<polyline points="892.7,661.4 908.7,655.4" fill="none" stroke="#22b08a" stroke-width="1" />
<polyline points="882.9,689.2 857.2,700.9 881.9,710.9 907.9,698.9" fill="none" stroke="#22b08a" stroke-width="1" />
<polyline points="891.9,692.9 907.9,686.9" fill="none" stroke="#22b08a" stroke-width="1" />
<polyline points="882.1,717.5 856.4,729.2 881.1,739.2 907.1,727.2" fill="none" stroke="#22b08a" stroke-width="1" />
<polyline points="891.1,721.2 907.1,715.2" fill="none" stroke="#22b08a" stroke-width="1" />
<polyline points="881.4,745.7 855.7,757.4 880.4,767.4 906.4,755.4" fill="none" stroke="#22b08a" stroke-width="1" />
<polyline points="890.4,749.4 906.4,743.4" fill="none" stroke="#22b08a" stroke-width="1" />
<polyline points="880.7,773.9 855.0,785.6 879.7,795.6 905.7,783.6" fill="none" stroke="#22b08a" stroke-width="1" />
<polyline points="889.7,777.6 905.7,771.6" fill="none" stroke="#22b08a" stroke-width="1" />
<polygon points="672.7,440.6 694.4,449.9 692.6,479.5 671.2,470.2" fill="url(#g1)" />
<polygon points="694.4,449.9 749.9,425.0 748.0,454.7 692.6,479.5" fill="url(#g2)" />
<polygon points="749.9,425.0 773.3,434.4 770.7,464.0 748.0,454.7" fill="url(#g3)" />
<polygon points="773.3,434.4 792.1,424.5 789.5,454.1 770.7,464.0" fill="url(#g4)" />
<polygon points="671.2,470.2 692.6,479.5 690.9,509.1 669.7,499.8" fill="url(#g5)" />
<polygon points="692.6,479.5 748.0,454.7 746.0,484.3 690.9,509.1" fill="url(#g6)" />
<polygon points="748.0,454.7 770.7,464.0 768.2,493.6 746.0,484.3" fill="url(#g7)" />
<polygon points="770.7,464.0 789.5,454.1 786.9,483.7 768.2,493.6" fill="url(#g8)" />
<polygon points="669.7,499.8 690.9,509.1 689.2,537.3 668.3,528.0" fill="url(#g9)" />
<polygon points="690.9,509.1 746.0,484.3 744.1,512.5 689.2,537.3" fill="url(#g10)" />
<polygon points="746.0,484.3 768.2,493.6 765.8,521.8 744.1,512.5" fill="url(#g11)" />
<polygon points="768.2,493.6 786.9,483.7 784.4,511.9 765.8,521.8" fill="url(#g12)" />
<polygon points="668.3,528.0 689.2,537.3 687.8,562.7 667.1,553.4" fill="url(#g13)" />
<polygon points="689.2,537.3 744.1,512.5 742.5,537.9 687.8,562.7" fill="url(#g14)" />
<polygon points="744.1,512.5 765.8,521.8 763.6,547.2 742.5,537.9" fill="url(#g15)" />
<polygon points="765.8,521.8 784.4,511.9 782.2,537.3 763.6,547.2" fill="url(#g16)" />
<polygon points="667.1,553.4 687.8,562.7 686.2,589.5 665.7,580.2" fill="url(#g17)" />
<polygon points="687.8,562.7 742.5,537.9 740.7,564.7 686.2,589.5" fill="url(#g18)" />
<polygon points="742.5,537.9 763.6,547.2 761.3,574.0 740.7,564.7" fill="url(#g19)" />
<polygon points="763.6,547.2 782.2,537.3 779.9,564.1 761.3,574.0" fill="url(#g20)" />
<polygon points="665.7,580.2 686.2,589.5 684.8,613.5 664.5,604.2" fill="url(#g21)" />
<polygon points="686.2,589.5 740.7,564.7 739.1,588.7 684.8,613.5" fill="url(#g22)" />
<polygon points="740.7,564.7 761.3,574.0 759.2,598.0 739.1,588.7" fill="url(#g23)" />
<polygon points="761.3,574.0 779.9,564.1 777.7,588.1 759.2,598.0" fill="url(#g24)" />
<polygon points="664.5,604.2 684.8,613.5 683.4,637.5 663.3,628.2" fill="url(#g25)" />
<polygon points="684.8,613.5 739.1,588.7 737.5,612.6 683.4,637.5" fill="url(#g26)" />
<polygon points="739.1,588.7 759.2,598.0 757.2,621.9 737.5,612.6" fill="url(#g27)" />
<polygon points="759.2,598.0 777.7,588.1 775.6,612.1 757.2,621.9" fill="url(#g28)" />
<polygon points="663.3,628.2 683.4,637.5 682.2,658.6 662.3,649.3" fill="url(#g29)" />
<polygon points="683.4,637.5 737.5,612.6 736.1,633.8 682.2,658.6" fill="url(#g30)" />
<polygon points="737.5,612.6 757.2,621.9 755.3,643.1 736.1,633.8" fill="url(#g31)" />
<polygon points="757.2,621.9 775.6,612.1 773.8,633.2 755.3,643.1" fill="url(#g32)" />
<polygon points="662.3,649.3 682.2,658.6 680.8,682.6 661.1,673.3" fill="url(#g33)" />
<polygon points="682.2,658.6 736.1,633.8 734.6,657.8 680.8,682.6" fill="url(#g34)" />
<polygon points="736.1,633.8 755.3,643.1 753.3,667.1 734.6,657.8" fill="url(#g35)" />
<polygon points="755.3,643.1 773.8,633.2 771.7,657.2 753.3,667.1" fill="url(#g36)" />
<polygon points="661.1,673.3 680.8,682.6 679.4,706.6 663.9,698.1" fill="url(#g37)" />
<polygon points="680.8,682.6 734.6,657.8 733.0,681.7 679.4,706.6" fill="url(#g38)" />
<polygon points="734.6,657.8 753.3,667.1 751.2,691.1 733.0,681.7" fill="url(#g39)" />
<polygon points="753.3,667.1 771.7,657.2 769.6,681.2 751.2,691.1" fill="url(#g40)" />
<polygon points="915.8,521.6 944.5,534.2 936.7,565.1 908.6,552.4" fill="url(#g41)" />
<polygon points="944.5,534.2 1017.2,501.8 1010.2,530.8 936.7,565.1" fill="url(#g42)" />
<polygon points="908.6,552.4 936.7,565.1 928.5,597.6 901.1,584.9" fill="url(#g43)" />
<polygon points="936.7,565.1 1010.2,530.8 1002.7,561.4 928.5,597.6" fill="url(#g44)" />
<polygon points="901.1,584.9 928.5,597.6 920.7,628.4 893.9,615.8" fill="url(#g45)" />
<polygon points="928.5,597.6 1002.7,561.4 995.7,590.4 920.7,628.4" fill="url(#g46)" />
<polygon points="893.9,615.8 920.7,628.4 913.3,657.5 887.2,644.9" fill="url(#g47)" />
<polygon points="920.7,628.4 995.7,590.4 989.0,617.8 913.3,657.5" fill="url(#g48)" />
<polygon points="887.2,644.9 913.3,657.5 906.0,686.6 880.4,674.0" fill="url(#g49)" />
<polygon points="913.3,657.5 989.0,617.8 982.4,645.2 906.0,686.6" fill="url(#g50)" />
<polygon points="880.4,674.0 906.0,686.6 899.0,714.0 874.1,701.4" fill="url(#g51)" />
<polygon points="906.0,686.6 982.4,645.2 976.1,671.0 899.0,714.0" fill="url(#g52)" />
<polygon points="874.1,701.4 899.0,714.0 892.1,741.4 867.7,728.8" fill="url(#g53)" />
<polygon points="899.0,714.0 976.1,671.0 969.9,696.8 892.1,741.4" fill="url(#g54)" />
<polygon points="867.7,728.8 892.1,741.4 884.8,770.5 861.0,757.9" fill="url(#g55)" />
<polygon points="892.1,741.4 969.9,696.8 963.2,724.2 884.8,770.5" fill="url(#g56)" />
<polygon points="861.0,757.9 884.8,770.5 877.2,800.7 854.0,788.0" fill="url(#g57)" />
<polygon points="884.8,770.5 963.2,724.2 956.3,752.5 877.2,800.7" fill="url(#g58)" />
<polygon points="854.0,788.0 877.2,800.7 877.0,827.1 854.4,813.4" fill="url(#g59)" />
<polygon points="877.2,800.7 956.3,752.5 950.3,777.4 877.0,827.1" fill="url(#g60)" />
<polygon points="574.5,362.5 610.0,373.8 798.6,319.0 762.0,311.0" fill="url(#g61)" />
<polygon points="610.0,373.8 655.5,387.2 843.4,328.7 798.6,319.0" fill="#0050a0" />
<polygon points="655.5,387.2 676.0,393.2 863.1,333.0 843.4,328.7" fill="url(#g62)" />
<polygon points="676.0,393.2 694.0,398.4 880.3,336.8 863.1,333.0" fill="url(#g63)" />
<polygon points="694.0,398.4 708.8,403.0 894.5,339.8 880.3,336.8" fill="url(#g64)" />
<polygon points="708.8,403.0 731.0,409.9 915.8,344.5 894.5,339.8" fill="url(#g65)" />
<polygon points="731.0,409.9 752.6,416.4 936.6,349.0 915.8,344.5" fill="url(#g66)" />
<polygon points="752.6,416.4 775.0,424.1 958.1,353.7 936.6,349.0" fill="url(#g67)" />
<polygon points="775.0,424.1 792.0,429.3 974.4,357.2 958.1,353.7" fill="url(#g68)" />
<polygon points="792.0,429.3 813.6,436.2 995.1,361.7 974.4,357.2" fill="url(#g69)" />
<polygon points="813.6,436.2 828.0,441.3 1008.9,364.8 995.1,361.7" fill="url(#g70)" />
<polygon points="828.0,441.3 839.4,443.9 1019.8,367.1 1008.9,364.8" fill="url(#g71)" />
<polygon points="839.4,443.9 901.0,460.0 1077.1,379.6 1019.8,367.1" fill="#0050a0" />
<polygon points="901.0,460.0 957.5,475.5 1129.5,391.0 1077.1,379.6" fill="url(#g72)" />
<polygon points="574.5,362.5 610.0,373.8 613.8,427.0 578.8,413.8" fill="url(#g73)" />
<polygon points="610.0,373.8 655.5,387.2 658.0,438.8 613.8,427.0" fill="url(#g74)" />
<polygon points="655.5,387.2 676.0,393.2 677.8,447.3 658.0,438.8" fill="url(#g75)" />
<polygon points="676.0,393.2 694.0,398.4 695.0,454.2 677.8,447.3" fill="url(#g76)" />
<polygon points="694.0,398.4 708.8,403.0 710.5,459.4 695.0,454.2" fill="url(#g77)" />
<polygon points="708.8,403.0 731.0,409.9 732.0,466.3 710.5,459.4" fill="url(#g78)" />
<polygon points="731.0,409.9 752.6,416.4 753.4,474.8 732.0,466.3" fill="url(#g79)" />
<polygon points="752.6,416.4 775.0,424.1 775.8,483.4 753.4,474.8" fill="url(#g80)" />
<polygon points="775.0,424.1 792.0,429.3 793.0,488.6 775.8,483.4" fill="url(#g81)" />
<polygon points="792.0,429.3 813.6,436.2 813.6,496.3 793.0,488.6" fill="url(#g82)" />
<polygon points="813.6,436.2 828.0,441.3 828.2,503.2 813.6,496.3" fill="url(#g83)" />
<polygon points="828.0,441.3 839.4,443.9 839.4,504.0 828.2,503.2" fill="url(#g84)" />
<polygon points="839.4,443.9 901.0,460.0 899.5,524.5 839.4,504.0" fill="url(#g85)" />
<polygon points="901.0,460.0 957.5,475.5 954.5,542.5 899.5,524.5" fill="url(#g86)" />
<polygon points="957.5,475.5 1129.5,391.0 1122.5,448.5 954.5,542.5" fill="url(#g87)" />
<polygon points="1049.5,452.0 1055.0,463.0 1049.5,469.0 1044.0,463.0" fill="#0a8a0a" />
<polygon points="1049.5,452.0 1055.0,463.0 1044.0,463.0" fill="#12a012" />
<polyline points="547.5,347.0 745.0,301.0 745.5,313.5" fill="none" stroke="#38b8f0" stroke-width="1" />
<polyline points="547.5,347.0 552.5,398.8 577.0,391.0" fill="none" stroke="#38b8f0" stroke-width="1" />
<polyline points="547.5,347.0 577.5,357.5" fill="none" stroke="#a080e0" stroke-width="1" />
<polyline points="552.5,398.8 578.0,408.0" fill="none" stroke="#a080e0" stroke-width="1" />
<polyline points="577.5,357.5 776.0,308.8 745.0,301.0" fill="none" stroke="#f080c0" stroke-width="1" />
<polyline points="776.0,308.8 815.0,318.5" fill="none" stroke="#1080ff" stroke-width="1" />
<polyline points="815.0,318.5 1075.0,380.0" fill="none" stroke="#22b08a" stroke-width="1" />
<polyline points="877.0,457.5 1070.0,382.5" fill="none" stroke="#f080c0" stroke-width="1" stroke-dasharray="2 1"/>
<polyline points="877.0,457.5 875.0,522.0" fill="none" stroke="#f080c0" stroke-width="1" />
<polyline points="820.0,501.0 874.5,522.0 884.0,519.0" fill="none" stroke="#f080c0" stroke-width="1" />
<polyline points="828.0,441.0 828.0,503.0" fill="none" stroke="#1080ff" stroke-width="1" />
<polyline points="811.0,436.0 811.0,497.0" fill="none" stroke="#1080ff" stroke-width="1" />
<polyline points="775.0,424.0 811.0,436.0" fill="none" stroke="#1080ff" stroke-width="1" />
<polyline points="809.4,434.4 1013.0,366.4" fill="none" stroke="#1080ff" stroke-width="1" stroke-dasharray="2 1"/>
<polyline points="775.0,484.0 811.0,497.0 829.0,503.5 834.0,502.0" fill="none" stroke="#1080ff" stroke-width="1" />
<polyline points="828.0,441.4 1025.0,370.0 1073.0,382.8" fill="none" stroke="#1080ff" stroke-width="1" stroke-dasharray="2 1"/>
<polyline points="658.5,386.2 846.4,327.7" fill="none" stroke="#18b080" stroke-width="1" stroke-dasharray="3 2"/>
<polyline points="679.0,392.2 866.1,332.0" fill="none" stroke="#18b080" stroke-width="1" stroke-dasharray="3 2"/>
<polyline points="697.0,397.4 883.3,335.8" fill="none" stroke="#18b080" stroke-width="1" stroke-dasharray="3 2"/>
<polyline points="711.8,402.0 897.5,338.8" fill="none" stroke="#18b080" stroke-width="1" stroke-dasharray="3 2"/>
<polyline points="734.0,408.9 918.8,343.5" fill="none" stroke="#18b080" stroke-width="1" stroke-dasharray="3 2"/>
<polyline points="755.6,415.4 939.6,348.0" fill="none" stroke="#18b080" stroke-width="1" stroke-dasharray="3 2"/>
<polyline points="778.0,423.1 961.1,352.7" fill="none" stroke="#18b080" stroke-width="1" stroke-dasharray="3 2"/>
<polyline points="795.0,428.3 977.4,356.2" fill="none" stroke="#18b080" stroke-width="1" stroke-dasharray="3 2"/>
<polyline points="816.6,435.2 998.1,360.7" fill="none" stroke="#18b080" stroke-width="1" stroke-dasharray="3 2"/>
<polyline points="831.0,440.3 1011.9,363.8" fill="none" stroke="#18b080" stroke-width="1" stroke-dasharray="3 2"/>
<polyline points="616.0,371.8 804.6,317.0" fill="none" stroke="#1070e0" stroke-width="1" stroke-dasharray="1 3"/></svg>
<div class="a" style="left:326px;top:185px;width:80px;height:80px;background:#fff;border-right:1px solid #808080;border-bottom:1px solid #808080"></div>
<svg class="a" style="left:326px;top:185px" width="80" height="80" viewBox="0 0 80 80" ><path d="M40.500 38.500v-22M40.500 38.500l17 8M40.500 38.500l-17 8" stroke="#000" stroke-width="1.400" fill="none"/><path d="M40.500 15l-2 4.500h4zM59.500 47.500l-5-.5 1.700-3.300zM21.500 47.500l5-.5-1.700-3.300z" fill="#000" stroke="#000" stroke-width=".800"/></svg>
<span class="t" id="t68" style="left:361px;top:185px;font-size:14.5px;font-weight:bold;font-family:'Liberation Sans',sans-serif">Y</span>
<span class="t" id="t69" style="left:335px;top:228.5px;font-size:14.5px;font-weight:bold;font-family:'Liberation Sans',sans-serif">Z</span>
<span class="t" id="t70" style="left:387px;top:228.5px;font-size:14.5px;font-weight:bold;font-family:'Liberation Sans',sans-serif">X</span>
<div class="a" style="left:409px;top:188px;width:223px;height:26px;background:#f0f0f0;border-right:1px solid #a0a0a0;border-bottom:1px solid #a0a0a0"></div>
<svg class="a" style="left:417px;top:193px" width="12" height="16" viewBox="0 0 12 16" ><path d="M1.500 1v11l3-3 2 5 2-1-2-5h4z" fill="#fff" stroke="#000"/></svg>
<svg class="a" style="left:435px;top:193px" width="17" height="17" viewBox="0 0 17 17" ><ellipse cx="8.500" cy="8" rx="3.500" ry="7.500" stroke="#0000f0" fill="none" stroke-width="1.200"/><ellipse cx="8.500" cy="8" rx="7.500" ry="3.500" stroke="#0000f0" fill="none" stroke-width="1.200"/><path d="M2 8h4M4 6l2 2-2 2M11 13l1-3 2 2" stroke="#0000f0" fill="none" stroke-width="1.200"/></svg>
<svg class="a" style="left:459px;top:193px" width="16" height="17" viewBox="0 0 16 17" ><path d="M7.500 1v14M7.500 1l-2.500 3M7.500 1l2.500 3M5 7l2.500-3 2.500 3M1 11c1 5 12 5 13 0M1 11v3M14 11v3" stroke="#0000f0" fill="none" stroke-width="1.200" stroke-dasharray="2 1"/></svg>
<div class="a" style="left:480px;top:191px;width:23px;height:21px;border:1px solid #707070;border-radius:4px;background:#dcdcdc;box-shadow:inset 1px 1px 1px #b8b8b8"></div>
<svg class="a" style="left:483px;top:194px" width="17" height="17" viewBox="0 0 17 17" ><circle cx="6.500" cy="6.500" r="5.500" stroke="#f00000" fill="none" stroke-width="1.600"/><circle cx="10" cy="6" r="4.500" stroke="#f00000" fill="none" stroke-width="1.200"/><path d="M3 6.500h7M6.500 3v7" stroke="#f00000" fill="none" stroke-width="2.200"/><path d="M10 10l5 5" stroke="#f00000" fill="none" stroke-width="2.400"/></svg>
<div class="a" style="left:505px;top:191px;width:1px;height:21px;background:#a0a0a0"></div>
<div class="a" style="left:506px;top:191px;width:1px;height:21px;background:#fff"></div>
<svg class="a" style="left:511px;top:193px" width="16" height="16" viewBox="0 0 16 16" ><path d="M0 3.500h12M9 0l5 3.500-5 3.500z" stroke="#a8a8a8" fill="#a8a8a8" stroke-width="1.600"/><circle cx="5" cy="8" r="1.800" fill="#a8a8a8"/><path d="M2 11l3 3 3-3" stroke="#a8a8a8" fill="none" stroke-dasharray="1 1"/></svg>
<svg class="a" style="left:535px;top:195px" width="16" height="12" viewBox="0 0 16 12" ><path d="M1 1l11 6" stroke="#a8a8a8" stroke-dasharray="2 1"/><path d="M10 4l5 4-6 1z" fill="#a8a8a8"/><circle cx="5" cy="9" r="1.800" fill="#a8a8a8"/></svg>
<svg class="a" style="left:557px;top:200px" width="17" height="10" viewBox="0 6 17 10" ><path d="M2 9h3M1 11l2 2M5.500 9.500h7v5h-7a2.500 2.500 0 0 1 0-5zM13 10v4M15 10v4" stroke="#0000e0" stroke-width="1.400" fill="none"/></svg>
<span class="t" id="t71" style="left:557px;top:193px;font-size:7.5px;color:#0000e0;letter-spacing:-0.11px;font-weight:bold">INFO</span>
<svg class="a" style="left:580px;top:200px" width="17" height="10" viewBox="0 6 17 10" ><path d="M2 9h3M1 11l2 2M5.500 9.500h7v5h-7a2.500 2.500 0 0 1 0-5zM13 10v4M15 10v4" stroke="#0000e0" stroke-width="1.400" fill="none"/></svg>
<span class="t" id="t72" style="left:580px;top:193px;font-size:7.5px;color:#0000e0;letter-spacing:-0.84px;font-weight:bold">SHOT</span>
<div class="a" style="left:603px;top:191px;width:1px;height:21px;background:#a0a0a0"></div>
<div class="a" style="left:604px;top:191px;width:1px;height:21px;background:#fff"></div>
<div class="a" style="left:615px;top:199px;width:4px;height:4px;background:#0000e0;border-radius:50%"></div>
<div class="a" style="left:1247px;top:188px;width:24px;height:46px;background:#f0f0f0;border-right:1px solid #a0a0a0;border-bottom:1px solid #a0a0a0"></div>
<svg class="a" style="left:1252px;top:192px" width="16" height="16" viewBox="0 0 16 16" ><rect x="5" y="1" width="10" height="10" fill="#807000" stroke="#000"/><rect x="8" y="2" width="5" height="3" fill="#d0d0d0"/><circle cx="9" cy="9" r="2" fill="#000"/><rect x="1" y="6" width="10" height="9" fill="#fff" stroke="#000" stroke-width="1.200"/><path d="M3 9h6M3 12h6M5 8v6M8 8v6" stroke="#909090"/></svg>
<svg class="a" style="left:1251px;top:215px" width="16" height="16" viewBox="0 0 16 16" ><rect x=".500" y=".500" width="14" height="14" fill="#fff" stroke="#b8b8b8"/><path d="M2 3.500h11M2 5.500h11M2 7.500h11M2 9.500h11M2 11.500h11" stroke="#b0b0b0" shape-rendering="crispEdges"/></svg>
<div class="a" style="left:0px;top:970px;width:1280px;height:1px;background:#b4b4b4"></div>
<div class="a" style="left:0px;top:971px;width:1280px;height:1px;background:#8c8c8c"></div>
<div class="a" style="left:0px;top:972px;width:1280px;height:1px;background:#e0e0e0"></div>
<div class="a" style="left:0px;top:973px;width:1280px;height:1px;background:#fff"></div>
<span class="t" id="t73" style="left:6px;top:977.5px;font-size:12.5px;letter-spacing:-0.50px;">モード:</span>
<span class="t" id="t74" style="left:49px;top:977.5px;font-size:12.5px;color:#000080;letter-spacing:-0.50px;">結果</span>
<div class="a" style="left:99px;top:975px;width:1px;height:17px;background:#c8c8c8"></div>
<div class="a" style="left:112px;top:977px;width:12px;height:12px;border-radius:50%;border:1px solid #8a8a8a;background:radial-gradient(circle at 50% 40%,#fff 0,#e8e8e8 60%,#c8c8c8 100%)"></div>
<div class="a" style="left:115px;top:980px;width:6px;height:6px;border-radius:50%;background:radial-gradient(circle at 40% 35%,#60c0f0 0,#1060a0 60%,#103060 100%)"></div>
<span class="t" id="t75" style="left:128px;top:977.5px;font-size:12.5px;letter-spacing:-0.50px;">比率</span>
<div class="a" style="left:183px;top:977px;width:12px;height:12px;border-radius:50%;border:1px solid #8a8a8a;background:radial-gradient(circle at 50% 40%,#fff 0,#e8e8e8 60%,#c8c8c8 100%)"></div>
<span class="t" id="t76" style="left:199px;top:977.5px;font-size:12.5px;letter-spacing:-0.50px;">絶対値</span>
<span class="t" id="t77" style="left:287px;top:980.5px;font-size:12.5px;letter-spacing:0.40px;">不平衡力 : F : 4.82E-001 &lt;= 1.00E+000 M : 2.77E-001 &lt;= 1.00E+000</span>
<div class="a" style="left:1195px;top:975px;width:1px;height:17px;background:#d8d8d8"></div>
<div class="a" style="left:1157px;top:987px;width:68px;height:10px;border:1px solid #707070;border-radius:3px;background:#f4f4f4"></div>
<div class="a" style="left:18px;top:987px;width:26px;height:12px;border-radius:50%;border:1px solid #90a0b8;background:#c8d4e4"></div>
</body></html>
